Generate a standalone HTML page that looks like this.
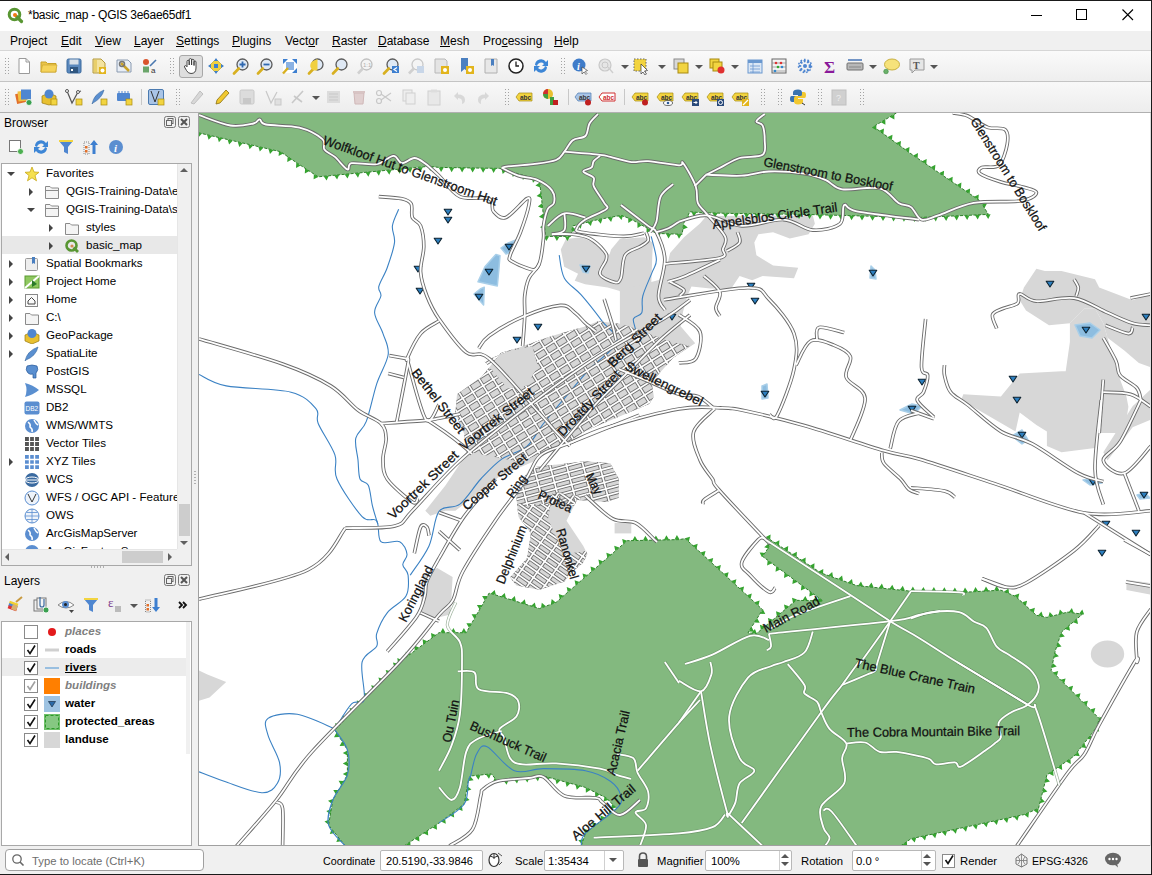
<!DOCTYPE html>
<html><head><meta charset="utf-8">
<style>
*{margin:0;padding:0;box-sizing:border-box}
html,body{width:1152px;height:875px;overflow:hidden;background:#f0f0f0;font-family:"Liberation Sans",sans-serif;font-size:12px;color:#000}
.a{position:absolute}
#title{left:0;top:0;width:1151px;height:31px;background:#fff}
#menu{left:0;top:31px;width:1151px;height:19px;background:#f0f0f0}
.mi{position:absolute;top:3px;font-size:12px;white-space:nowrap}
.mi u{text-decoration:underline}
#tb1{left:0;top:50px;width:1151px;height:31px;background:linear-gradient(#fafafa,#eeeeee);border-top:1px solid #d6d6d6}
#tb2{left:0;top:81px;width:1151px;height:31px;background:linear-gradient(#f8f8f8,#ededed);border-top:1px solid #c4c4c4}
.ic{position:absolute}
.grip{position:absolute;width:4px;height:17px;background-image:radial-gradient(circle,#a8a8a8 0.7px,transparent 0.9px);background-size:2px 3px}
.t{position:absolute;white-space:nowrap;font-size:12px;line-height:14px}
.arr{position:absolute;width:0;height:0}
.ar{border-top:4px solid transparent;border-bottom:4px solid transparent;border-left:4px solid #444}
.ad{border-left:4px solid transparent;border-right:4px solid transparent;border-top:4px solid #444}
.cb{position:absolute;width:14px;height:14px;border:1px solid #8a8a8a;background:#fff}
.dd{position:absolute;width:0;height:0;border-left:4px solid transparent;border-right:4px solid transparent;border-top:4px solid #555}
</style><style>.rc{fill:none;stroke:#6b6b6b;stroke-width:3.6;stroke-linejoin:round}.rw{fill:none;stroke:#fff;stroke-width:1.8;stroke-linejoin:round}.gc{fill:none;stroke:#5d7f5b;stroke-width:3.2;stroke-linejoin:round;opacity:.6}.gw{fill:none;stroke:#fff;stroke-width:1.8;stroke-linejoin:round}.tc{fill:none;stroke:#6b6b6b;stroke-width:3.4}.tw{fill:none;stroke:#fff;stroke-width:1.7}</style></head><body>

<div class="a" id="title">
<svg class="a" style="left:7px;top:7px" width="17" height="17" viewBox="0 0 17 17"><circle cx="7.5" cy="7.5" r="5.3" fill="none" stroke="#589632" stroke-width="3"/><path d="M9.5 9.5 L14.5 14.5" stroke="#589632" stroke-width="3.2" stroke-linecap="round"/><circle cx="8" cy="8" r="2" fill="#ee7913"/></svg>
<div class="t" style="left:28px;top:8px;font-size:12px;letter-spacing:-0.25px">*basic_map - QGIS 3e6ae65df1</div>
<svg class="a" style="left:1031px;top:9px" width="12" height="12"><path d="M0 6.5 H11" stroke="#000" stroke-width="1"/></svg>
<svg class="a" style="left:1076px;top:9px" width="12" height="12"><rect x="0.5" y="0.5" width="10" height="10" fill="none" stroke="#000"/></svg>
<svg class="a" style="left:1122px;top:9px" width="12" height="12"><path d="M0.5 0.5 L11 11 M11 0.5 L0.5 11" stroke="#000" stroke-width="1.1"/></svg>
</div>
<div class="a" id="menu"><div class="mi" style="left:10px">Pro<u>j</u>ect</div><div class="mi" style="left:61px"><u>E</u>dit</div><div class="mi" style="left:95px"><u>V</u>iew</div><div class="mi" style="left:134px"><u>L</u>ayer</div><div class="mi" style="left:176px"><u>S</u>ettings</div><div class="mi" style="left:232px"><u>P</u>lugins</div><div class="mi" style="left:285px">Vect<u>o</u>r</div><div class="mi" style="left:332px"><u>R</u>aster</div><div class="mi" style="left:378px"><u>D</u>atabase</div><div class="mi" style="left:440px"><u>M</u>esh</div><div class="mi" style="left:483px">Pro<u>c</u>essing</div><div class="mi" style="left:554px"><u>H</u>elp</div></div>
<div class="a" id="tb1"></div><div class="a" id="tb2"></div>
<svg class="ic" style="left:5px;top:58px" width="4" height="17"><rect x="0" y="0" width="1" height="1" fill="#a4a4a4"/><rect x="0" y="3" width="1" height="1" fill="#a4a4a4"/><rect x="0" y="6" width="1" height="1" fill="#a4a4a4"/><rect x="0" y="9" width="1" height="1" fill="#a4a4a4"/><rect x="0" y="12" width="1" height="1" fill="#a4a4a4"/><rect x="0" y="15" width="1" height="1" fill="#a4a4a4"/><rect x="3" y="0" width="1" height="1" fill="#a4a4a4"/><rect x="3" y="3" width="1" height="1" fill="#a4a4a4"/><rect x="3" y="6" width="1" height="1" fill="#a4a4a4"/><rect x="3" y="9" width="1" height="1" fill="#a4a4a4"/><rect x="3" y="12" width="1" height="1" fill="#a4a4a4"/><rect x="3" y="15" width="1" height="1" fill="#a4a4a4"/></svg><svg class="ic" style="left:15px;top:57px" width="18" height="18" viewBox="0 0 18 18"><path d="M4 1.5 H11 L14.5 5 V16.5 H4 Z" fill="#fff" stroke="#9a9a9a"/><path d="M11 1.5 V5 H14.5" fill="none" stroke="#9a9a9a"/></svg><svg class="ic" style="left:40px;top:57px" width="18" height="18" viewBox="0 0 18 18"><path d="M1 5 H6 L7.5 6.5 H16 V15 H1 Z" fill="#e9c44a" stroke="#c9a32a"/><path d="M2.5 8 H17 L15.5 15 H1 Z" fill="#f5d35a" stroke="#c9a32a" stroke-width="0.6"/></svg><svg class="ic" style="left:65px;top:57px" width="18" height="18" viewBox="0 0 18 18"><rect x="2" y="2" width="14" height="14" rx="1.5" fill="#5a88bd" stroke="#3b6a9e"/><rect x="4.5" y="2.5" width="9" height="5" fill="#d7dfe8"/><rect x="5" y="10" width="8" height="6" fill="#2f5680"/><rect x="6" y="12" width="2" height="2" fill="#fff"/></svg><svg class="ic" style="left:90px;top:57px" width="18" height="18" viewBox="0 0 18 18"><path d="M3 2 H11 L15 6 V16 H3 Z" fill="#f3e3a0" stroke="#b59a3a"/><rect x="4" y="3" width="3" height="12" fill="#e8cf6a"/><rect x="9" y="10" width="7" height="7" fill="#e2b51d"/><circle cx="12.5" cy="13.5" r="2" fill="#fff"/></svg><svg class="ic" style="left:115px;top:57px" width="18" height="18" viewBox="0 0 18 18"><path d="M2 3 H13 L16 6 V15 H2 Z" fill="#e8eef6" stroke="#8a9ab0"/><path d="M6 6 L14 14" stroke="#c9a32a" stroke-width="2.5"/><circle cx="7" cy="7" r="2.5" fill="none" stroke="#777" stroke-width="1.5"/></svg><svg class="ic" style="left:140px;top:57px" width="18" height="18" viewBox="0 0 18 18"><circle cx="6" cy="5" r="3" fill="#d9542c"/><rect x="3" y="9.5" width="6" height="6" fill="#6aa56a"/><path d="M10 9 L16 3" stroke="#4a78b0" stroke-width="1.6"/><text x="11" y="16" font-size="8" font-family="Liberation Sans" fill="#333">a</text></svg><svg class="ic" style="left:170px;top:58px" width="4" height="17"><rect x="0" y="0" width="1" height="1" fill="#a4a4a4"/><rect x="0" y="3" width="1" height="1" fill="#a4a4a4"/><rect x="0" y="6" width="1" height="1" fill="#a4a4a4"/><rect x="0" y="9" width="1" height="1" fill="#a4a4a4"/><rect x="0" y="12" width="1" height="1" fill="#a4a4a4"/><rect x="0" y="15" width="1" height="1" fill="#a4a4a4"/><rect x="3" y="0" width="1" height="1" fill="#a4a4a4"/><rect x="3" y="3" width="1" height="1" fill="#a4a4a4"/><rect x="3" y="6" width="1" height="1" fill="#a4a4a4"/><rect x="3" y="9" width="1" height="1" fill="#a4a4a4"/><rect x="3" y="12" width="1" height="1" fill="#a4a4a4"/><rect x="3" y="15" width="1" height="1" fill="#a4a4a4"/></svg><div class="a" style="left:179px;top:55px;width:24px;height:23px;border:1px solid #a8a8a8;border-radius:3px;background:#dedede"></div><svg class="ic" style="left:182px;top:57px" width="18" height="18" viewBox="0 0 18 18"><path d="M5 9 V4.5 Q5 3.3 6.2 3.3 Q7.2 3.3 7.2 4.5 V8 V2.8 Q7.2 1.6 8.4 1.6 Q9.6 1.6 9.6 2.8 V8 V3.5 Q9.6 2.3 10.8 2.3 Q12 2.3 12 3.5 V8.5 V5 Q12 4 13 4 Q14 4 14 5 V11 Q14 16.5 9 16.5 Q6 16.5 4.5 13.5 L2.5 10 Q2.2 8.8 3.4 8.6 Q4.3 8.6 5 9.8 Z" fill="#fff" stroke="#333" stroke-width="0.9"/></svg><svg class="ic" style="left:207px;top:57px" width="18" height="18" viewBox="0 0 18 18"><path d="M9 2 L16 9 L9 16 L2 9 Z" fill="#f0d040" stroke="#b49a20" stroke-width="0.6"/><path d="M9 1 L11 4 H7 Z M9 17 L11 14 H7 Z M1 9 L4 7 V11 Z M17 9 L14 7 V11 Z" fill="#3d7fd0"/><rect x="7" y="7" width="4" height="4" fill="#3d7fd0"/></svg><svg class="ic" style="left:232px;top:57px" width="18" height="18" viewBox="0 0 18 18"><circle cx="10.5" cy="7.5" r="5.5" fill="#dfe9f5" stroke="#5a5a5a" stroke-width="1.3"/><path d="M6.8 11.5 L2 16.5" stroke="#d8b020" stroke-width="2.6" stroke-linecap="round"/><path d="M7.5 7.5 H13.5 M10.5 4.5 V10.5" stroke="#2f68b0" stroke-width="1.8"/></svg><svg class="ic" style="left:256px;top:57px" width="18" height="18" viewBox="0 0 18 18"><circle cx="10.5" cy="7.5" r="5.5" fill="#dfe9f5" stroke="#5a5a5a" stroke-width="1.3"/><path d="M6.8 11.5 L2 16.5" stroke="#d8b020" stroke-width="2.6" stroke-linecap="round"/><path d="M7.5 7.5 H13.5" stroke="#2f68b0" stroke-width="1.8"/></svg><svg class="ic" style="left:281px;top:57px" width="18" height="18" viewBox="0 0 18 18"><rect x="2" y="2" width="14" height="14" fill="#fff" stroke="none"/><path d="M2 2 H7 L2 7 Z M16 2 H11 L16 7 Z M16 16 H11 L16 11 Z" fill="#3d7fd0"/><rect x="5" y="5" width="8" height="8" fill="#3d7fd0" opacity="0.6"/><path d="M7 11 L2 16.5" stroke="#d8b020" stroke-width="2.4"/></svg><svg class="ic" style="left:307px;top:57px" width="18" height="18" viewBox="0 0 18 18"><circle cx="10.5" cy="7.5" r="5.5" fill="#dfe9f5" stroke="#5a5a5a" stroke-width="1.3"/><path d="M6.8 11.5 L2 16.5" stroke="#d8b020" stroke-width="2.6" stroke-linecap="round"/><path d="M6 4 A5 5 0 0 0 10.5 13 V2 Z" fill="#f0d040"/></svg><svg class="ic" style="left:331px;top:57px" width="18" height="18" viewBox="0 0 18 18"><circle cx="10.5" cy="7.5" r="5.5" fill="#dfe9f5" stroke="#5a5a5a" stroke-width="1.3"/><path d="M6.8 11.5 L2 16.5" stroke="#d8b020" stroke-width="2.6" stroke-linecap="round"/></svg><svg class="ic" style="left:356px;top:57px" width="18" height="18" viewBox="0 0 18 18"><circle cx="10.5" cy="7.5" r="5.5" fill="#f4f4f4" stroke="#c0c0c0" stroke-width="1.3"/><path d="M6.8 11.5 L2 16.5" stroke="#d0d0d0" stroke-width="2.6"/><text x="7" y="10" font-size="6" fill="#b0b0b0" font-family="Liberation Sans">1:1</text></svg><svg class="ic" style="left:382px;top:57px" width="18" height="18" viewBox="0 0 18 18"><circle cx="10.5" cy="7.5" r="5.5" fill="#dfe9f5" stroke="#5a5a5a" stroke-width="1.3"/><path d="M6.8 11.5 L2 16.5" stroke="#d8b020" stroke-width="2.6" stroke-linecap="round"/><rect x="10" y="9" width="7" height="7" fill="#3d7fd0"/><path d="M15 10.5 L12 12.5 L15 14.5" stroke="#fff" fill="none" stroke-width="1.2"/></svg><svg class="ic" style="left:407px;top:57px" width="18" height="18" viewBox="0 0 18 18"><circle cx="10.5" cy="7.5" r="5.5" fill="#f4f4f4" stroke="#c8c8c8" stroke-width="1.3"/><path d="M6.8 11.5 L2 16.5" stroke="#d0d0d0" stroke-width="2.6"/><rect x="10" y="9" width="7" height="7" fill="#c8d6e8"/></svg><svg class="ic" style="left:432px;top:57px" width="18" height="18" viewBox="0 0 18 18"><path d="M3 2 H13 L15 4 V16 H3 Z" fill="#e4e4e4" stroke="#b8b8b8"/><rect x="9" y="9" width="8" height="8" fill="#e2b51d"/><circle cx="13" cy="13" r="2" fill="#fff"/></svg><svg class="ic" style="left:457px;top:57px" width="18" height="18" viewBox="0 0 18 18"><path d="M4 1 H11 V15 L7.5 12 L4 15 Z" fill="#4a7fc0"/><rect x="9" y="9" width="8" height="8" fill="#e2b51d"/><circle cx="13" cy="13" r="2" fill="#fff"/></svg><svg class="ic" style="left:482px;top:57px" width="18" height="18" viewBox="0 0 18 18"><path d="M3 2 H15 V16 H3 Z" fill="#e8e8e8" stroke="#b0b0b0"/><path d="M9 2 H12 V9 L10.5 8 L9 9 Z" fill="#4a7fc0"/></svg><svg class="ic" style="left:507px;top:57px" width="18" height="18" viewBox="0 0 18 18"><circle cx="9" cy="9" r="7" fill="#fff" stroke="#222" stroke-width="1.5"/><path d="M9 4.5 V9 H12" stroke="#222" fill="none" stroke-width="1.3"/></svg><svg class="ic" style="left:532px;top:57px" width="18" height="18" viewBox="0 0 18 18"><path d="M3 8 A6 6 0 0 1 14 5 L16 3 V9 H10 L12 7 A4 4 0 0 0 5 9 Z M15 10 A6 6 0 0 1 4 13 L2 15 V9 H8 L6 11 A4 4 0 0 0 13 9 Z" fill="#3d86d6"/></svg><svg class="ic" style="left:561px;top:58px" width="4" height="17"><rect x="0" y="0" width="1" height="1" fill="#a4a4a4"/><rect x="0" y="3" width="1" height="1" fill="#a4a4a4"/><rect x="0" y="6" width="1" height="1" fill="#a4a4a4"/><rect x="0" y="9" width="1" height="1" fill="#a4a4a4"/><rect x="0" y="12" width="1" height="1" fill="#a4a4a4"/><rect x="0" y="15" width="1" height="1" fill="#a4a4a4"/><rect x="3" y="0" width="1" height="1" fill="#a4a4a4"/><rect x="3" y="3" width="1" height="1" fill="#a4a4a4"/><rect x="3" y="6" width="1" height="1" fill="#a4a4a4"/><rect x="3" y="9" width="1" height="1" fill="#a4a4a4"/><rect x="3" y="12" width="1" height="1" fill="#a4a4a4"/><rect x="3" y="15" width="1" height="1" fill="#a4a4a4"/></svg><svg class="ic" style="left:571px;top:57px" width="18" height="18" viewBox="0 0 18 18"><circle cx="8" cy="8" r="6.5" fill="#3f7cc9"/><text x="6" y="12.5" font-size="10" font-style="italic" font-weight="bold" fill="#fff" font-family="Liberation Serif">i</text><path d="M11 10 L11 17 L13 15 L15 17.5 L16 16.5 L14 14.5 L16.5 13.5 Z" fill="#fff" stroke="#333" stroke-width="0.6"/></svg><svg class="ic" style="left:597px;top:57px" width="18" height="18" viewBox="0 0 18 18"><circle cx="8" cy="8" r="6" fill="#e6e6e6" stroke="#c8c8c8" stroke-width="1.2"/><circle cx="8" cy="8" r="3" fill="none" stroke="#c8c8c8"/><path d="M11 10 L16 16" stroke="#cfcfcf" stroke-width="1.4"/></svg><div class="dd" style="left:621px;top:65px"></div><svg class="ic" style="left:632px;top:57px" width="18" height="18" viewBox="0 0 18 18"><rect x="2" y="2" width="12" height="12" fill="#f2d440" stroke="#666" stroke-dasharray="1.5 1.5"/><path d="M9 7 L9 17 L11 15 L13 18 L14.5 17 L12.5 14 L15.5 13.5 Z" fill="#fff" stroke="#333" stroke-width="0.7"/></svg><div class="dd" style="left:658px;top:65px"></div><svg class="ic" style="left:672px;top:57px" width="18" height="18" viewBox="0 0 18 18"><rect x="2" y="2" width="10" height="10" fill="#d8d8d8" stroke="#8a8a8a"/><rect x="6" y="6" width="10" height="10" fill="#f2d440" stroke="#a88a10"/></svg><div class="dd" style="left:695px;top:65px"></div><svg class="ic" style="left:708px;top:57px" width="18" height="18" viewBox="0 0 18 18"><rect x="2" y="2" width="9" height="9" fill="#f2d440" stroke="#a88a10"/><rect x="5" y="5" width="9" height="9" fill="#f2d440" stroke="#a88a10"/><circle cx="13" cy="13" r="3.5" fill="#e03030"/></svg><div class="dd" style="left:731px;top:65px"></div><svg class="ic" style="left:746px;top:57px" width="18" height="18" viewBox="0 0 18 18"><rect x="2" y="3" width="14" height="13" fill="#dbe7f5" stroke="#6a98cf"/><rect x="2" y="3" width="14" height="3" fill="#6a98cf"/><path d="M4 9 H14 M4 12 H14 M4 15 H14 M7 6 V16" stroke="#6a98cf" stroke-width="0.8"/></svg><svg class="ic" style="left:770px;top:57px" width="18" height="18" viewBox="0 0 18 18"><rect x="2" y="2" width="14" height="14" fill="#f4f4f4" stroke="#666"/><path d="M2 6 H16 M2 10 H16 M2 14 H16" stroke="#888" stroke-width="0.7"/><circle cx="6" cy="6" r="1.3" fill="#d33"/><circle cx="11" cy="6" r="1.3" fill="#d33"/><circle cx="8" cy="10" r="1.3" fill="#3a3"/><circle cx="12" cy="10" r="1.3" fill="#38c"/><circle cx="5" cy="14" r="1.3" fill="#38c"/></svg><svg class="ic" style="left:796px;top:57px" width="18" height="18" viewBox="0 0 18 18"><circle cx="9" cy="9" r="5" fill="none" stroke="#4f86d0" stroke-width="2.5" stroke-dasharray="2 1.6"/><circle cx="9" cy="9" r="6.5" fill="none" stroke="#4f86d0" stroke-width="1.5" stroke-dasharray="1.6 2"/><circle cx="9" cy="9" r="2" fill="#4f86d0"/></svg><svg class="ic" style="left:821px;top:57px" width="18" height="18" viewBox="0 0 18 18"><text x="3" y="16" font-size="17" font-weight="bold" fill="#8a1a9a" font-family="Liberation Serif">&#931;</text></svg><svg class="ic" style="left:846px;top:57px" width="18" height="18" viewBox="0 0 18 18"><rect x="1" y="6" width="16" height="7" rx="1" fill="#b8b8b8" stroke="#707070"/><path d="M2 3 H16" stroke="#3a6ab0" stroke-width="1.4"/><path d="M3 10 H15" stroke="#888"/></svg><div class="dd" style="left:869px;top:65px"></div><svg class="ic" style="left:882px;top:57px" width="18" height="18" viewBox="0 0 18 18"><ellipse cx="10" cy="7.5" rx="7.5" ry="5.5" fill="#f6e27a" stroke="#c8b040"/><circle cx="4" cy="14.5" r="2.3" fill="#6ab06a" stroke="#3a8a3a" stroke-width="0.6"/></svg><svg class="ic" style="left:908px;top:57px" width="18" height="18" viewBox="0 0 18 18"><path d="M2 2 H16 V13 H7 L4 16 V13 H2 Z" fill="#e6e6e6" stroke="#9a9a9a"/><text x="5" y="11.5" font-size="10" font-weight="bold" fill="#555" font-family="Liberation Serif">T</text></svg><div class="dd" style="left:930px;top:65px"></div><svg class="ic" style="left:5px;top:89px" width="4" height="17"><rect x="0" y="0" width="1" height="1" fill="#a4a4a4"/><rect x="0" y="3" width="1" height="1" fill="#a4a4a4"/><rect x="0" y="6" width="1" height="1" fill="#a4a4a4"/><rect x="0" y="9" width="1" height="1" fill="#a4a4a4"/><rect x="0" y="12" width="1" height="1" fill="#a4a4a4"/><rect x="0" y="15" width="1" height="1" fill="#a4a4a4"/><rect x="3" y="0" width="1" height="1" fill="#a4a4a4"/><rect x="3" y="3" width="1" height="1" fill="#a4a4a4"/><rect x="3" y="6" width="1" height="1" fill="#a4a4a4"/><rect x="3" y="9" width="1" height="1" fill="#a4a4a4"/><rect x="3" y="12" width="1" height="1" fill="#a4a4a4"/><rect x="3" y="15" width="1" height="1" fill="#a4a4a4"/></svg><svg class="ic" style="left:15px;top:88px" width="18" height="18" viewBox="0 0 18 18"><rect x="1" y="5" width="10" height="10" fill="#e2702a" transform="rotate(-12 6 10)"/><rect x="3" y="3" width="10" height="10" fill="#f0c040" transform="rotate(-6 8 8)"/><rect x="6" y="1.5" width="10" height="10" fill="#4f86d0"/><circle cx="14" cy="14.5" r="3" fill="#3aa050" stroke="#fff" stroke-width="0.8"/></svg><svg class="ic" style="left:40px;top:88px" width="18" height="18" viewBox="0 0 18 18"><path d="M2 8 L9 5 L16 8 V15 L9 17 L2 15 Z" fill="#e8c030" stroke="#9a7a10" stroke-width="0.7"/><circle cx="9" cy="6" r="4.5" fill="#4f86d0"/><rect x="11" y="11" width="6" height="6" fill="#f2d440" stroke="#a88a10" stroke-width="0.7"/></svg><svg class="ic" style="left:65px;top:88px" width="18" height="18" viewBox="0 0 18 18"><path d="M2 3 L7 15 L13 4 L16 3" fill="none" stroke="#555" stroke-width="1.2"/><circle cx="2" cy="3" r="1.5" fill="#fff" stroke="#555"/><circle cx="13" cy="4" r="1.5" fill="#fff" stroke="#555"/><rect x="11" y="11" width="6" height="6" fill="#f2d440" stroke="#a88a10" stroke-width="0.7"/></svg><svg class="ic" style="left:90px;top:88px" width="18" height="18" viewBox="0 0 18 18"><path d="M2 16 Q4 6 14 2 Q12 10 3 15 Z" fill="#5a8fd0" stroke="#3a6aa0" stroke-width="0.6"/><rect x="11" y="11" width="6" height="6" fill="#f2d440" stroke="#a88a10" stroke-width="0.7"/></svg><svg class="ic" style="left:115px;top:88px" width="18" height="18" viewBox="0 0 18 18"><rect x="2" y="5" width="13" height="8" rx="1" fill="#4f86d0"/><path d="M4 3 V5 M7 3 V5 M10 3 V5 M13 3 V5" stroke="#4f86d0"/><rect x="11" y="11" width="6" height="6" fill="#f2d440" stroke="#a88a10" stroke-width="0.7"/></svg><div class="a" style="left:141px;top:89px;width:1px;height:16px;background:#c8c8c8"></div><svg class="ic" style="left:147px;top:88px" width="18" height="18" viewBox="0 0 18 18"><rect x="1.5" y="1.5" width="15" height="15" rx="1.5" fill="#a9c4e6" stroke="#4a7ab0"/><path d="M4 3 L8 14 L12 3" stroke="#333" fill="none"/><rect x="11" y="11" width="6" height="6" fill="#f2d440" stroke="#a88a10" stroke-width="0.7"/></svg><svg class="ic" style="left:176px;top:89px" width="4" height="17"><rect x="0" y="0" width="1" height="1" fill="#a4a4a4"/><rect x="0" y="3" width="1" height="1" fill="#a4a4a4"/><rect x="0" y="6" width="1" height="1" fill="#a4a4a4"/><rect x="0" y="9" width="1" height="1" fill="#a4a4a4"/><rect x="0" y="12" width="1" height="1" fill="#a4a4a4"/><rect x="0" y="15" width="1" height="1" fill="#a4a4a4"/><rect x="3" y="0" width="1" height="1" fill="#a4a4a4"/><rect x="3" y="3" width="1" height="1" fill="#a4a4a4"/><rect x="3" y="6" width="1" height="1" fill="#a4a4a4"/><rect x="3" y="9" width="1" height="1" fill="#a4a4a4"/><rect x="3" y="12" width="1" height="1" fill="#a4a4a4"/><rect x="3" y="15" width="1" height="1" fill="#a4a4a4"/></svg><svg class="ic" style="left:188px;top:88px" width="18" height="18" viewBox="0 0 18 18"><path d="M3 15 L12 3 L15 6 L6 16 Z" fill="#d8d8d8" stroke="#c0c0c0"/></svg><svg class="ic" style="left:213px;top:88px" width="18" height="18" viewBox="0 0 18 18"><path d="M3 16 L4 12 L13 2 L16 5 L7 15 Z" fill="#f0c830" stroke="#8a7010" stroke-width="0.8"/></svg><svg class="ic" style="left:238px;top:88px" width="18" height="18" viewBox="0 0 18 18"><rect x="2" y="2" width="14" height="14" rx="1.5" fill="#dcdcdc" stroke="#c8c8c8"/><rect x="5" y="10" width="8" height="6" fill="#c8c8c8"/></svg><svg class="ic" style="left:264px;top:88px" width="18" height="18" viewBox="0 0 18 18"><path d="M2 3 L7 15 L13 4" fill="none" stroke="#c8c8c8" stroke-width="1.2"/><rect x="11" y="11" width="6" height="6" fill="#e0e0e0" stroke="#c8c8c8"/></svg><svg class="ic" style="left:289px;top:88px" width="18" height="18" viewBox="0 0 18 18"><path d="M3 15 L14 3 M5 8 L13 14" stroke="#c8c8c8" stroke-width="1.6"/></svg><div class="dd" style="left:312px;top:96px"></div><svg class="ic" style="left:325px;top:88px" width="18" height="18" viewBox="0 0 18 18"><rect x="2" y="3" width="13" height="12" fill="#dcdcdc"/><path d="M4 6 H13 M4 9 H13 M4 12 H13" stroke="#c8c8c8"/></svg><svg class="ic" style="left:350px;top:88px" width="18" height="18" viewBox="0 0 18 18"><path d="M4 5 H14 L13 16 H5 Z" fill="#e0cfcf" stroke="#d0b8b8"/><rect x="3" y="3" width="12" height="2" fill="#d8c4c4"/></svg><svg class="ic" style="left:375px;top:88px" width="18" height="18" viewBox="0 0 18 18"><circle cx="4" cy="5" r="2.5" fill="none" stroke="#c8c8c8" stroke-width="1.2"/><circle cx="4" cy="13" r="2.5" fill="none" stroke="#c8c8c8" stroke-width="1.2"/><path d="M6 6 L16 13 M6 12 L16 5" stroke="#c8c8c8" stroke-width="1.2"/></svg><svg class="ic" style="left:400px;top:88px" width="18" height="18" viewBox="0 0 18 18"><rect x="3" y="2" width="9" height="11" fill="#eee" stroke="#d0d0d0"/><rect x="6" y="5" width="9" height="11" fill="#eee" stroke="#d0d0d0"/></svg><svg class="ic" style="left:425px;top:88px" width="18" height="18" viewBox="0 0 18 18"><rect x="3" y="3" width="12" height="14" fill="#e8e8e8" stroke="#d0d0d0"/><rect x="6" y="1.5" width="6" height="3" fill="#ddd"/></svg><svg class="ic" style="left:450px;top:88px" width="18" height="18" viewBox="0 0 18 18"><path d="M4 8 L8 4 V6.5 Q15 6.5 15 12 Q15 15 12 16 Q13 10 8 10 V12 Z" fill="#d8d8d8"/></svg><svg class="ic" style="left:475px;top:88px" width="18" height="18" viewBox="0 0 18 18"><path d="M14 8 L10 4 V6.5 Q3 6.5 3 12 Q3 15 6 16 Q5 10 10 10 V12 Z" fill="#d8d8d8"/></svg><svg class="ic" style="left:505px;top:89px" width="4" height="17"><rect x="0" y="0" width="1" height="1" fill="#a4a4a4"/><rect x="0" y="3" width="1" height="1" fill="#a4a4a4"/><rect x="0" y="6" width="1" height="1" fill="#a4a4a4"/><rect x="0" y="9" width="1" height="1" fill="#a4a4a4"/><rect x="0" y="12" width="1" height="1" fill="#a4a4a4"/><rect x="0" y="15" width="1" height="1" fill="#a4a4a4"/><rect x="3" y="0" width="1" height="1" fill="#a4a4a4"/><rect x="3" y="3" width="1" height="1" fill="#a4a4a4"/><rect x="3" y="6" width="1" height="1" fill="#a4a4a4"/><rect x="3" y="9" width="1" height="1" fill="#a4a4a4"/><rect x="3" y="12" width="1" height="1" fill="#a4a4a4"/><rect x="3" y="15" width="1" height="1" fill="#a4a4a4"/></svg><svg class="ic" style="left:515px;top:88px" width="18" height="18" viewBox="0 0 18 18"><path d="M1 9 L4 5 H17 V13 H4 Z" fill="#f2d440" stroke="#a88a10" stroke-width="0.7"/><text x="5" y="11.5" font-size="6.5" font-weight="bold" fill="#333" font-family="Liberation Sans">abc</text></svg><svg class="ic" style="left:541px;top:88px" width="18" height="18" viewBox="0 0 18 18"><circle cx="7" cy="6" r="5" fill="#e8c030"/><path d="M7 6 L2 6 A5 5 0 0 1 7 1 Z" fill="#d03030"/><path d="M7 6 L7 11 A5 5 0 0 1 2 6 Z" fill="#40a040"/><rect x="9" y="9" width="4" height="8" fill="#40a040"/><rect x="12" y="12" width="5" height="5" fill="#c02020"/></svg><div class="a" style="left:568px;top:89px;width:1px;height:16px;background:#c8c8c8"></div><svg class="ic" style="left:574px;top:88px" width="18" height="18" viewBox="0 0 18 18"><path d="M1 9 L4 5 H17 V13 H4 Z" fill="#a9c4e6" stroke="#4a7ab0" stroke-width="0.7"/><text x="5" y="11.5" font-size="6.5" font-weight="bold" fill="#333" font-family="Liberation Sans">abc</text><circle cx="14" cy="14.5" r="3" fill="#c02020"/></svg><svg class="ic" style="left:598px;top:88px" width="18" height="18" viewBox="0 0 18 18"><path d="M1 9 L4 5 H17 V13 H4 Z" fill="#fff" stroke="#d03030" stroke-width="1"/><text x="5" y="11.5" font-size="6.5" font-weight="bold" fill="#d03030" font-family="Liberation Sans">abc</text></svg><div class="a" style="left:624px;top:89px;width:1px;height:16px;background:#c8c8c8"></div><svg class="ic" style="left:631px;top:88px" width="18" height="18" viewBox="0 0 18 18"><path d="M1 9 L4 5 H17 V13 H4 Z" fill="#f2d440" stroke="#a88a10" stroke-width="0.7"/><text x="5" y="11.5" font-size="6.5" font-weight="bold" fill="#333" font-family="Liberation Sans">abc</text><circle cx="14" cy="14.5" r="3" fill="#c02020"/></svg><svg class="ic" style="left:656px;top:88px" width="18" height="18" viewBox="0 0 18 18"><path d="M1 9 L4 5 H17 V13 H4 Z" fill="#f2d440" stroke="#a88a10" stroke-width="0.7"/><text x="5" y="11.5" font-size="6.5" font-weight="bold" fill="#333" font-family="Liberation Sans">abc</text><ellipse cx="12" cy="15" rx="4.5" ry="2.5" fill="#fff" stroke="#333" stroke-width="0.7"/><circle cx="12" cy="15" r="1.3" fill="#2a5a9a"/></svg><svg class="ic" style="left:681px;top:88px" width="18" height="18" viewBox="0 0 18 18"><path d="M1 9 L4 5 H17 V13 H4 Z" fill="#f2d440" stroke="#a88a10" stroke-width="0.7"/><text x="5" y="11.5" font-size="6.5" font-weight="bold" fill="#333" font-family="Liberation Sans">abc</text><rect x="11" y="11" width="7" height="7" fill="#2a4a7a"/><path d="M12.5 14.5 H16 M14.5 13 L16 14.5 L14.5 16" stroke="#fff" fill="none"/></svg><svg class="ic" style="left:706px;top:88px" width="18" height="18" viewBox="0 0 18 18"><path d="M1 9 L4 5 H17 V13 H4 Z" fill="#f2d440" stroke="#a88a10" stroke-width="0.7"/><text x="5" y="11.5" font-size="6.5" font-weight="bold" fill="#333" font-family="Liberation Sans">abc</text><rect x="11" y="11" width="7" height="7" fill="#2a4a7a"/><circle cx="14.5" cy="14.5" r="2" fill="none" stroke="#fff"/></svg><svg class="ic" style="left:731px;top:88px" width="18" height="18" viewBox="0 0 18 18"><path d="M1 9 L4 5 H17 V13 H4 Z" fill="#f2d440" stroke="#a88a10" stroke-width="0.7"/><text x="5" y="11.5" font-size="6.5" font-weight="bold" fill="#333" font-family="Liberation Sans">abc</text><rect x="11" y="11" width="7" height="7" fill="#e2b51d"/><path d="M12 17 L17 12" stroke="#fff" stroke-width="1.2"/></svg><svg class="ic" style="left:761px;top:89px" width="4" height="17"><rect x="0" y="0" width="1" height="1" fill="#a4a4a4"/><rect x="0" y="3" width="1" height="1" fill="#a4a4a4"/><rect x="0" y="6" width="1" height="1" fill="#a4a4a4"/><rect x="0" y="9" width="1" height="1" fill="#a4a4a4"/><rect x="0" y="12" width="1" height="1" fill="#a4a4a4"/><rect x="0" y="15" width="1" height="1" fill="#a4a4a4"/><rect x="3" y="0" width="1" height="1" fill="#a4a4a4"/><rect x="3" y="3" width="1" height="1" fill="#a4a4a4"/><rect x="3" y="6" width="1" height="1" fill="#a4a4a4"/><rect x="3" y="9" width="1" height="1" fill="#a4a4a4"/><rect x="3" y="12" width="1" height="1" fill="#a4a4a4"/><rect x="3" y="15" width="1" height="1" fill="#a4a4a4"/></svg><svg class="ic" style="left:778px;top:89px" width="4" height="17"><rect x="0" y="0" width="1" height="1" fill="#a4a4a4"/><rect x="0" y="3" width="1" height="1" fill="#a4a4a4"/><rect x="0" y="6" width="1" height="1" fill="#a4a4a4"/><rect x="0" y="9" width="1" height="1" fill="#a4a4a4"/><rect x="0" y="12" width="1" height="1" fill="#a4a4a4"/><rect x="0" y="15" width="1" height="1" fill="#a4a4a4"/><rect x="3" y="0" width="1" height="1" fill="#a4a4a4"/><rect x="3" y="3" width="1" height="1" fill="#a4a4a4"/><rect x="3" y="6" width="1" height="1" fill="#a4a4a4"/><rect x="3" y="9" width="1" height="1" fill="#a4a4a4"/><rect x="3" y="12" width="1" height="1" fill="#a4a4a4"/><rect x="3" y="15" width="1" height="1" fill="#a4a4a4"/></svg><svg class="ic" style="left:789px;top:88px" width="18" height="18" viewBox="0 0 18 18"><path d="M9 1.5 Q4 1.5 4 4.5 V7 H9 V8 H2.5 Q1 8 1 11 Q1 14 3 14 H5 V11.5 Q5 10 7 10 H11 Q13 10 13 8 V4.5 Q13 1.5 9 1.5 Z" fill="#3a74b0"/><path d="M9 16.5 Q14 16.5 14 13.5 V11 H9 V10 H15.5 Q17 10 17 7 Q17 4 15 4 H13 V6.5 Q13 8 11 8 H7 Q5 8 5 10 V13.5 Q5 16.5 9 16.5 Z" fill="#f2c830"/><path d="M13 15 L16 17" stroke="#333"/></svg><svg class="ic" style="left:818px;top:89px" width="4" height="17"><rect x="0" y="0" width="1" height="1" fill="#a4a4a4"/><rect x="0" y="3" width="1" height="1" fill="#a4a4a4"/><rect x="0" y="6" width="1" height="1" fill="#a4a4a4"/><rect x="0" y="9" width="1" height="1" fill="#a4a4a4"/><rect x="0" y="12" width="1" height="1" fill="#a4a4a4"/><rect x="0" y="15" width="1" height="1" fill="#a4a4a4"/><rect x="3" y="0" width="1" height="1" fill="#a4a4a4"/><rect x="3" y="3" width="1" height="1" fill="#a4a4a4"/><rect x="3" y="6" width="1" height="1" fill="#a4a4a4"/><rect x="3" y="9" width="1" height="1" fill="#a4a4a4"/><rect x="3" y="12" width="1" height="1" fill="#a4a4a4"/><rect x="3" y="15" width="1" height="1" fill="#a4a4a4"/></svg><svg class="ic" style="left:830px;top:88px" width="18" height="18" viewBox="0 0 18 18"><rect x="2" y="2" width="14" height="15" fill="#d0d0d0" stroke="#c0c0c0"/><text x="6" y="13" font-size="9" fill="#eee" font-family="Liberation Sans">?</text></svg><svg class="ic" style="left:860px;top:89px" width="4" height="17"><rect x="0" y="0" width="1" height="1" fill="#a4a4a4"/><rect x="0" y="3" width="1" height="1" fill="#a4a4a4"/><rect x="0" y="6" width="1" height="1" fill="#a4a4a4"/><rect x="0" y="9" width="1" height="1" fill="#a4a4a4"/><rect x="0" y="12" width="1" height="1" fill="#a4a4a4"/><rect x="0" y="15" width="1" height="1" fill="#a4a4a4"/><rect x="3" y="0" width="1" height="1" fill="#a4a4a4"/><rect x="3" y="3" width="1" height="1" fill="#a4a4a4"/><rect x="3" y="6" width="1" height="1" fill="#a4a4a4"/><rect x="3" y="9" width="1" height="1" fill="#a4a4a4"/><rect x="3" y="12" width="1" height="1" fill="#a4a4a4"/><rect x="3" y="15" width="1" height="1" fill="#a4a4a4"/></svg>
<div class="a" style="left:0;top:112px;width:1151px;height:1px;background:#b0b0b0"></div>
<div class="t" style="left:4px;top:116px;font-size:12px">Browser</div><svg class="ic" style="left:164px;top:116px" width="26" height="13"><rect x="0.5" y="0.5" width="11" height="11" rx="2" fill="none" stroke="#777"/><rect x="4" y="2.5" width="5" height="5" fill="none" stroke="#666"/><rect x="2.5" y="4.5" width="5" height="5" fill="#f0f0f0" stroke="#666"/><rect x="14.5" y="0.5" width="11" height="11" rx="2" fill="none" stroke="#777"/><path d="M17 3 L23 9 M23 3 L17 9" stroke="#555" stroke-width="2"/></svg><svg class="ic" style="left:7px;top:138px" width="18" height="18" viewBox="0 0 18 18"><rect x="2.5" y="2.5" width="11" height="11" fill="#fff" stroke="#777"/><circle cx="13.5" cy="13.5" r="3" fill="#4caf50" stroke="#fff" stroke-width="0.8"/></svg><svg class="ic" style="left:32px;top:138px" width="18" height="18" viewBox="0 0 18 18"><path d="M3 8 A6 6 0 0 1 14 5 L16 3 V9 H10 L12 7 A4 4 0 0 0 5 9 Z M15 10 A6 6 0 0 1 4 13 L2 15 V9 H8 L6 11 A4 4 0 0 0 13 9 Z" fill="#3d86d6"/></svg><svg class="ic" style="left:57px;top:138px" width="18" height="18" viewBox="0 0 18 18"><path d="M2 3 H16 L11 9 V16 L7 14 V9 Z" fill="#4f86d0"/><rect x="2" y="2" width="14" height="2" fill="#f2d440"/></svg><svg class="ic" style="left:82px;top:138px" width="18" height="18" viewBox="0 0 18 18"><rect x="2" y="4" width="5" height="12" fill="none" stroke="#888" stroke-dasharray="1 1"/><rect x="3" y="8" width="2.5" height="2.5" fill="#e2702a"/><rect x="3" y="12" width="2.5" height="2.5" fill="#e2702a"/><path d="M12 2 L16 7 H13.5 V16 H10.5 V7 H8 Z" fill="#3d7fd0"/></svg><svg class="ic" style="left:107px;top:138px" width="18" height="18" viewBox="0 0 18 18"><circle cx="9" cy="9" r="7" fill="#5b8ed0"/><text x="7" y="13.5" font-size="11" font-style="italic" font-weight="bold" fill="#fff" font-family="Liberation Serif">i</text></svg><div class="a" style="left:1px;top:163px;width:191px;height:403px;background:#fff;border:1px solid #a8a8a8"></div><div class="a" style="left:2px;top:236px;width:175px;height:18px;background:#e8e8e8"></div><div class="a" style="left:2px;top:164px;width:175px;height:385px;overflow:hidden"><div class="arr ad" style="left:5px;top:7.5px"></div><svg class="ic" style="left:22px;top:1.5px" width="16" height="16" viewBox="0 0 16 16"><path d="M8 1 L10 6 L15 6.3 L11 9.5 L12.5 14.8 L8 11.8 L3.5 14.8 L5 9.5 L1 6.3 L6 6 Z" fill="#f5e050" stroke="#c8a818" stroke-width="0.8"/></svg><div class="t" style="left:44px;top:2.0px;font-size:11.6px">Favorites</div><div class="arr ar" style="left:27px;top:23.5px"></div><svg class="ic" style="left:42px;top:19.5px" width="16" height="16" viewBox="0 0 16 16"><path d="M1.5 2.5 H6 L7.5 4 H14.5 V14.5 H1.5 Z" fill="#f4f4f4" stroke="#8a8a8a"/><path d="M1.5 6.5 H14.5" stroke="#8a8a8a"/></svg><div class="t" style="left:64px;top:20.0px;font-size:11.6px">QGIS-Training-Data\exercise_data</div><div class="arr ad" style="left:25px;top:43.5px"></div><svg class="ic" style="left:42px;top:37.5px" width="16" height="16" viewBox="0 0 16 16"><path d="M1.5 2.5 H6 L7.5 4 H14.5 V14.5 H1.5 Z" fill="#f4f4f4" stroke="#8a8a8a"/><path d="M1.5 6.5 H14.5" stroke="#8a8a8a"/></svg><div class="t" style="left:64px;top:38.0px;font-size:11.6px">QGIS-Training-Data\sample_data</div><div class="arr ar" style="left:47px;top:59.5px"></div><svg class="ic" style="left:62px;top:55.5px" width="16" height="16" viewBox="0 0 16 16"><path d="M1.5 3.5 H6 L7.5 5 H14.5 V14.5 H1.5 Z" fill="#f4f4f4" stroke="#8a8a8a"/></svg><div class="t" style="left:84px;top:56.0px;font-size:11.6px">styles</div><div class="arr ar" style="left:47px;top:77.5px"></div><svg class="ic" style="left:62px;top:73.5px" width="16" height="16" viewBox="0 0 16 16"><circle cx="7.5" cy="7.5" r="5" fill="none" stroke="#589632" stroke-width="2.6"/><path d="M9.5 9.5 L14 14" stroke="#589632" stroke-width="2.8"/><circle cx="8" cy="8" r="1.6" fill="#d08a50"/></svg><div class="t" style="left:84px;top:74.0px;font-size:11.6px">basic_map</div><div class="arr ar" style="left:7px;top:95.5px"></div><svg class="ic" style="left:22px;top:91.5px" width="16" height="16" viewBox="0 0 16 16"><rect x="1.5" y="2.5" width="12" height="12" rx="1" fill="#eee" stroke="#999"/><path d="M8 1 H11 V8 L9.5 7 L8 8 Z" fill="#4a7fc0"/></svg><div class="t" style="left:44px;top:92.0px;font-size:11.6px">Spatial Bookmarks</div><div class="arr ar" style="left:7px;top:113.5px"></div><svg class="ic" style="left:22px;top:109.5px" width="16" height="16" viewBox="0 0 16 16"><rect x="1" y="2" width="14" height="12" fill="#8fc860" stroke="#5a9a30"/><path d="M1 14 L15 2" stroke="#fff" stroke-width="2"/><path d="M8 6 L13 10 L8 13 Z" fill="#2a7a2a"/></svg><div class="t" style="left:44px;top:110.0px;font-size:11.6px">Project Home</div><div class="arr ar" style="left:7px;top:131.5px"></div><svg class="ic" style="left:22px;top:127.5px" width="16" height="16" viewBox="0 0 16 16"><rect x="1.5" y="2.5" width="12" height="12" fill="#fafafa" stroke="#888"/><path d="M4 9 L7.5 5.5 L11 9 V12 H4 Z" fill="none" stroke="#444"/></svg><div class="t" style="left:44px;top:128.0px;font-size:11.6px">Home</div><div class="arr ar" style="left:7px;top:149.5px"></div><svg class="ic" style="left:22px;top:145.5px" width="16" height="16" viewBox="0 0 16 16"><path d="M1.5 3.5 H6 L7.5 5 H14.5 V14.5 H1.5 Z" fill="#f4f4f4" stroke="#8a8a8a"/></svg><div class="t" style="left:44px;top:146.0px;font-size:11.6px">C:\</div><div class="arr ar" style="left:7px;top:167.5px"></div><svg class="ic" style="left:22px;top:163.5px" width="16" height="16" viewBox="0 0 16 16"><path d="M1 7 L8 4 L15 7 V13 L8 16 L1 13 Z" fill="#e8c030" stroke="#9a7a10" stroke-width="0.7"/><circle cx="8" cy="5.5" r="4.5" fill="#4f86d0"/></svg><div class="t" style="left:44px;top:164.0px;font-size:11.6px">GeoPackage</div><div class="arr ar" style="left:7px;top:185.5px"></div><svg class="ic" style="left:22px;top:181.5px" width="16" height="16" viewBox="0 0 16 16"><path d="M1 15 Q3 5 14 1 Q12 10 2 14 Z" fill="#5a8fd0" stroke="#3a6aa0" stroke-width="0.6"/></svg><div class="t" style="left:44px;top:182.0px;font-size:11.6px">SpatiaLite</div><svg class="ic" style="left:22px;top:199.5px" width="16" height="16" viewBox="0 0 16 16"><path d="M3 2 Q8 0 13 2 Q15 6 12 9 V14 H9 V10 Q6 11 4 9 Q1 6 3 2 Z" fill="#5a8fd0" stroke="#2a5a9a" stroke-width="0.7"/></svg><div class="t" style="left:44px;top:200.0px;font-size:11.6px">PostGIS</div><svg class="ic" style="left:22px;top:217.5px" width="16" height="16" viewBox="0 0 16 16"><path d="M1 1 Q9 3 15 8 Q9 13 1 15 Q4 8 1 1 Z" fill="#5a8fd0"/></svg><div class="t" style="left:44px;top:218.0px;font-size:11.6px">MSSQL</div><svg class="ic" style="left:22px;top:235.5px" width="16" height="16" viewBox="0 0 16 16"><rect x="0.5" y="1.5" width="15" height="13" rx="2" fill="#5b8ed0"/><text x="1.5" y="11" font-size="6.5" fill="#fff" font-family="Liberation Sans">DB2</text></svg><div class="t" style="left:44px;top:236.0px;font-size:11.6px">DB2</div><svg class="ic" style="left:22px;top:253.5px" width="16" height="16" viewBox="0 0 16 16"><circle cx="8" cy="8" r="7" fill="#5b8ed0"/><path d="M4 4 Q7 6 6 9 Q9 11 8 14 M10 2 Q12 6 14 7" stroke="#fff" fill="none" stroke-width="1.5"/></svg><div class="t" style="left:44px;top:254.0px;font-size:11.6px">WMS/WMTS</div><svg class="ic" style="left:22px;top:271.5px" width="16" height="16" viewBox="0 0 16 16"><rect x="1" y="1" width="14" height="14" fill="#555"/><path d="M5.5 1 V15 M10.5 1 V15 M1 5.5 H15 M1 10.5 H15" stroke="#fff" stroke-width="1.2"/></svg><div class="t" style="left:44px;top:272.0px;font-size:11.6px">Vector Tiles</div><div class="arr ar" style="left:7px;top:293.5px"></div><svg class="ic" style="left:22px;top:289.5px" width="16" height="16" viewBox="0 0 16 16"><rect x="1" y="1" width="14" height="14" fill="#5b8ed0"/><path d="M5.5 1 V15 M10.5 1 V15 M1 5.5 H15 M1 10.5 H15" stroke="#fff" stroke-width="1.4"/></svg><div class="t" style="left:44px;top:290.0px;font-size:11.6px">XYZ Tiles</div><svg class="ic" style="left:22px;top:307.5px" width="16" height="16" viewBox="0 0 16 16"><circle cx="8" cy="8" r="7" fill="#3a6aa0"/><ellipse cx="8" cy="8" rx="7" ry="3" fill="none" stroke="#fff"/><path d="M1 8 H15" stroke="#fff"/></svg><div class="t" style="left:44px;top:308.0px;font-size:11.6px">WCS</div><svg class="ic" style="left:22px;top:325.5px" width="16" height="16" viewBox="0 0 16 16"><circle cx="8" cy="8" r="7" fill="#eef3fa" stroke="#5b8ed0"/><path d="M4 4 L8 12 L12 4" stroke="#333" fill="none"/></svg><div class="t" style="left:44px;top:326.0px;font-size:11.6px">WFS / OGC API - Features</div><svg class="ic" style="left:22px;top:343.5px" width="16" height="16" viewBox="0 0 16 16"><circle cx="8" cy="8" r="7" fill="#eef3fa" stroke="#5b8ed0"/><path d="M1 8 H15 M8 1 V15 M2.5 4.5 H13.5 M2.5 11.5 H13.5" stroke="#5b8ed0" stroke-width="0.8"/></svg><div class="t" style="left:44px;top:344.0px;font-size:11.6px">OWS</div><svg class="ic" style="left:22px;top:361.5px" width="16" height="16" viewBox="0 0 16 16"><circle cx="8" cy="8" r="7" fill="#5b8ed0"/><path d="M4 4 Q7 6 6 9 Q9 11 8 14 M10 2 Q12 6 14 7" stroke="#fff" fill="none" stroke-width="1.5"/></svg><div class="t" style="left:44px;top:362.0px;font-size:11.6px">ArcGisMapServer</div><svg class="ic" style="left:22px;top:379.5px" width="16" height="16" viewBox="0 0 16 16"><circle cx="8" cy="8" r="7" fill="#5b8ed0"/></svg><div class="t" style="left:44px;top:380.0px;font-size:11.6px">ArcGisFeatureServer</div></div><div class="a" style="left:177px;top:164px;width:14px;height:385px;background:#f0f0f0;border-left:1px solid #e6e6e6"></div><div class="arr" style="left:180px;top:168px;border-left:4px solid transparent;border-right:4px solid transparent;border-bottom:4px solid #606060"></div><div class="a" style="left:179px;top:504px;width:11px;height:32px;background:#cdcdcd"></div><div class="arr" style="left:180px;top:541px;border-left:4px solid transparent;border-right:4px solid transparent;border-top:4px solid #606060"></div><div class="a" style="left:2px;top:549px;width:175px;height:16px;background:#f0f0f0;border-top:1px solid #e6e6e6"></div><div class="arr" style="left:5px;top:553px;border-top:4px solid transparent;border-bottom:4px solid transparent;border-right:4px solid #606060"></div><div class="a" style="left:122px;top:551px;width:41px;height:12px;background:#cdcdcd"></div><div class="arr" style="left:168px;top:553px;border-top:4px solid transparent;border-bottom:4px solid transparent;border-left:4px solid #606060"></div><div class="a" style="left:177px;top:549px;width:14px;height:16px;background:#f0f0f0"></div><div class="a" style="left:90px;top:566px;width:16px;height:2px;background-image:radial-gradient(circle,#b0b0b0 0.6px,transparent 0.8px);background-size:3px 2px"></div><div class="a" style="left:194px;top:470px;width:2px;height:16px;background-image:radial-gradient(circle,#b0b0b0 0.6px,transparent 0.8px);background-size:2px 3px"></div><div class="t" style="left:4px;top:574px;font-size:12px">Layers</div><svg class="ic" style="left:164px;top:574px" width="26" height="13"><rect x="0.5" y="0.5" width="11" height="11" rx="2" fill="none" stroke="#777"/><rect x="4" y="2.5" width="5" height="5" fill="none" stroke="#666"/><rect x="2.5" y="4.5" width="5" height="5" fill="#f0f0f0" stroke="#666"/><rect x="14.5" y="0.5" width="11" height="11" rx="2" fill="none" stroke="#777"/><path d="M17 3 L23 9 M23 3 L17 9" stroke="#555" stroke-width="2"/></svg><svg class="ic" style="left:7px;top:596px" width="18" height="18" viewBox="0 0 18 18"><path d="M9 6 L15 1" stroke="#c89a40" stroke-width="2"/><rect x="2" y="6" width="9" height="3" fill="#f0d030" transform="rotate(20 6 8)"/><rect x="1.5" y="8.5" width="9" height="3" fill="#4f86d0" transform="rotate(20 6 10)"/><rect x="1" y="11" width="9" height="3" fill="#e03030" transform="rotate(20 6 12)"/><path d="M6 8 L11 10 L9 15 L4 13 Z" fill="#d8b070"/></svg><svg class="ic" style="left:32px;top:596px" width="18" height="18" viewBox="0 0 18 18"><rect x="2" y="4" width="9" height="11" fill="none" stroke="#777"/><rect x="5" y="2" width="9" height="11" fill="#f4f4f4" stroke="#777"/><path d="M8 1 V9 Q8 11 10 11 Q12 11 12 9 V3" stroke="#3a6aa0" fill="none" stroke-width="1.2"/><circle cx="14" cy="14" r="3" fill="#3aa050" stroke="#fff" stroke-width="0.8"/></svg><svg class="ic" style="left:57px;top:596px" width="18" height="18" viewBox="0 0 18 18"><path d="M1 9 Q9 2 17 9 Q9 15 1 9 Z" fill="#fff" stroke="#888"/><circle cx="8.5" cy="8.5" r="3.5" fill="#5b8ed0"/><circle cx="8.5" cy="8.5" r="1.5" fill="#222"/><path d="M12 14 H17 L14.5 17 Z" fill="#444"/></svg><svg class="ic" style="left:82px;top:596px" width="18" height="18" viewBox="0 0 18 18"><path d="M2 3 H16 L11 9 V16 L7 14 V9 Z" fill="#4f86d0"/><rect x="2" y="2" width="14" height="2" fill="#f2d440"/></svg><svg class="ic" style="left:107px;top:596px" width="18" height="18" viewBox="0 0 18 18"><text x="1" y="11" font-size="13" fill="#7a3a8a" font-family="Liberation Serif">&#949;</text><rect x="8" y="10" width="6" height="6" fill="#bbb"/></svg><div class="dd" style="left:130px;top:604px"></div><svg class="ic" style="left:144px;top:596px" width="18" height="18" viewBox="0 0 18 18"><rect x="1.5" y="4" width="5" height="12" fill="none" stroke="#888" stroke-dasharray="1 1"/><rect x="2.5" y="8" width="2.5" height="2.5" fill="#e2702a"/><rect x="2.5" y="12" width="2.5" height="2.5" fill="#e2702a"/><path d="M12 16 L16 11 H13.5 V2 H10.5 V11 H8 Z" fill="#3d7fd0"/></svg><svg class="ic" style="left:178px;top:601px" width="10" height="8"><path d="M1 1 L4 4 L1 7 M5 1 L8 4 L5 7" stroke="#111" stroke-width="1.8" fill="none"/></svg><div class="a" style="left:1px;top:621px;width:191px;height:225px;background:#fff;border:1px solid #a8a8a8"></div><div class="a" style="left:2px;top:658px;width:186px;height:18px;background:#ececec"></div><div class="a" style="left:186px;top:622px;width:4px;height:132px;background:#f0f0f0"></div><div class="cb" style="left:24px;top:624.5px"></div><svg class="ic" style="left:44px;top:623.5px" width="16" height="16" viewBox="0 0 16 16"><circle cx="8" cy="8" r="4" fill="#e31a1c"/></svg><div class="t" style="left:65px;top:624.0px;font-size:11.6px;font-style:italic;font-weight:bold;color:#808080">places</div><div class="cb" style="left:24px;top:642.5px"></div><svg class="ic" style="left:25px;top:643.5px" width="12" height="12"><path d="M2.5 6 L5 9.5 L10 1.5" stroke="#111" stroke-width="1.6" fill="none"/></svg><svg class="ic" style="left:44px;top:641.5px" width="16" height="16" viewBox="0 0 16 16"><path d="M1 8 H15" stroke="#d0d0d0" stroke-width="3"/></svg><div class="t" style="left:65px;top:642.0px;font-size:11.6px;font-weight:bold">roads</div><div class="cb" style="left:24px;top:660.5px"></div><svg class="ic" style="left:25px;top:661.5px" width="12" height="12"><path d="M2.5 6 L5 9.5 L10 1.5" stroke="#111" stroke-width="1.6" fill="none"/></svg><svg class="ic" style="left:44px;top:659.5px" width="16" height="16" viewBox="0 0 16 16"><path d="M1 8 H15" stroke="#7eb0dc" stroke-width="1.5"/></svg><div class="t" style="left:65px;top:660.0px;font-size:11.6px;font-weight:bold;text-decoration:underline">rivers</div><div class="cb" style="left:24px;top:678.5px"></div><svg class="ic" style="left:25px;top:679.5px" width="12" height="12"><path d="M2.5 6 L5 9.5 L10 1.5" stroke="#a0a0a0" stroke-width="1.6" fill="none"/></svg><svg class="ic" style="left:44px;top:677.5px" width="16" height="16" viewBox="0 0 16 16"><rect x="0" y="0" width="16" height="16" fill="#ff7f00"/></svg><div class="t" style="left:65px;top:678.0px;font-size:11.6px;font-style:italic;font-weight:bold;color:#808080">buildings</div><div class="cb" style="left:24px;top:696.5px"></div><svg class="ic" style="left:25px;top:697.5px" width="12" height="12"><path d="M2.5 6 L5 9.5 L10 1.5" stroke="#111" stroke-width="1.6" fill="none"/></svg><svg class="ic" style="left:44px;top:695.5px" width="16" height="16" viewBox="0 0 16 16"><rect x="0" y="0" width="16" height="16" fill="#9ec3e2"/><path d="M4.5 5.5 H11.5 L8 11 Z" fill="#2a6aa8" stroke="#123" stroke-width="0.6"/></svg><div class="t" style="left:65px;top:696.0px;font-size:11.6px;font-weight:bold">water</div><div class="cb" style="left:24px;top:714.5px"></div><svg class="ic" style="left:25px;top:715.5px" width="12" height="12"><path d="M2.5 6 L5 9.5 L10 1.5" stroke="#111" stroke-width="1.6" fill="none"/></svg><svg class="ic" style="left:44px;top:713.5px" width="16" height="16" viewBox="0 0 16 16"><rect x="0" y="0" width="16" height="16" fill="#6fbf6a"/><rect x="1.5" y="1.5" width="13" height="13" fill="#86c882" stroke="#2e9a2a" stroke-dasharray="3 2"/></svg><div class="t" style="left:65px;top:714.0px;font-size:11.6px;font-weight:bold">protected_areas</div><div class="cb" style="left:24px;top:732.5px"></div><svg class="ic" style="left:25px;top:733.5px" width="12" height="12"><path d="M2.5 6 L5 9.5 L10 1.5" stroke="#111" stroke-width="1.6" fill="none"/></svg><svg class="ic" style="left:44px;top:731.5px" width="16" height="16" viewBox="0 0 16 16"><rect x="0" y="0" width="16" height="16" fill="#d7d7d7"/></svg><div class="t" style="left:65px;top:732.0px;font-size:11.6px;font-weight:bold">landuse</div>
<div class="a" style="left:198px;top:113px;width:953px;height:733px;background:#fff;overflow:hidden;border-left:1px solid #a0a0a0;border-bottom:1px solid #a0a0a0"><svg width="952" height="732" viewBox="199 113 952 732" style="position:absolute;left:0;top:0"><defs><clipPath id="ct"><path clip-rule="evenodd" d="M457.0,394.2 L481.3,377.2 L500.8,352.9 L517.8,348.1 L551.8,335.9 L585.8,326.2 L598.0,321.3 L619.9,323.8 L640.0,330.0 L665.0,340.0 L690.0,346.0 L673.3,357.8 L651.5,382.1 L653.9,396.7 L649.0,404.0 L585.8,430.7 L559.1,447.7 L537.2,455.0 L520.0,462.0 L470.0,452.0 L462.0,430.0 L455.4,412.7 Z M484.3,361.2 L507.6,351.6 L532.3,346.1 L537.8,366.6 L526.8,385.8 L507.6,388.6 L493.9,372.1 Z"/></clipPath><clipPath id="cs"><polygon points="518.4,485.3 531.0,467.4 585.4,461.2 610.4,463.3 618.8,479.0 618.8,497.8 606.3,502.0 577.0,499.9 566.5,520.8 583.3,545.9 587.4,554.3 583.3,562.6 568.6,575.2 564.4,581.4 539.4,589.8 516.4,585.6 510.1,577.3 526.8,558.4 531.0,533.4 518.4,516.6 516.4,497.8"/></clipPath><clipPath id="cu"><rect x="500" y="440" width="140" height="66"/></clipPath><clipPath id="cl"><path clip-rule="evenodd" d="M500,504 H640 V600 H500 Z M552.8,491.8 L580.0,496.6 L586.5,551.0 L564.0,554.2 L548.0,519.0 Z"/></clipPath></defs>
<polygon points="560.8,249.4 566.0,239.0 581.6,237.3 597.2,244.2 609.4,254.7 611.1,249.4 619.8,239.0 644.1,237.3 652.8,242.5 651.0,291.1 647.6,320.0 625.0,320.0 619.8,291.1 607.6,287.6 585.1,284.2 574.7,280.7 578.1,273.8 564.2,266.8" fill="#d7d7d7"/>
<polygon points="457.0,394.2 481.3,377.2 500.8,352.9 517.8,348.1 551.8,335.9 585.8,326.2 598.0,321.3 619.9,323.8 619.9,290.0 640.0,285.0 658.8,280.0 668.0,262.0 670.1,252.9 684.0,237.3 700.0,223.4 706.4,216.0 812.8,215.4 814.9,223.8 808.6,234.3 789.8,238.4 773.1,232.2 758.4,234.3 754.3,242.6 756.4,255.2 773.1,265.6 798.2,267.7 794.0,278.2 762.6,276.1 752.2,280.3 739.6,276.1 731.3,288.6 710.4,288.6 691.5,286.5 687.9,294.6 683.1,311.6 680.6,326.2 695.2,343.2 673.3,357.8 651.5,382.1 653.9,396.7 649.0,404.0 585.8,430.7 559.1,447.7 537.2,455.0 535.9,460.5 500.7,475.5 455.4,510.8 445.4,510.8 430.3,515.8 425.3,510.8 445.4,485.6 465.5,455.4 468.0,442.9 455.4,412.7" fill="#d7d7d7"/>
<polygon points="424.0,574.7 437.2,568.0 452.6,576.9 450.4,614.4 432.8,618.8 419.6,614.4" fill="#d7d7d7"/>
<polygon points="518.4,485.3 531.0,467.4 585.4,461.2 610.4,463.3 618.8,479.0 618.8,497.8 606.3,502.0 577.0,499.9 566.5,520.8 583.3,545.9 587.4,554.3 583.3,562.6 568.6,575.2 564.4,581.4 539.4,589.8 516.4,585.6 510.1,577.3 526.8,558.4 531.0,533.4 518.4,516.6 516.4,497.8" fill="#d7d7d7"/>
<polygon points="1023.9,287.6 1036.4,268.8 1044.8,270.9 1061.5,270.9 1095.0,279.3 1099.2,287.6 1132.6,300.2 1150.0,293.9 1150.0,367.1 1138.9,362.9 1124.3,350.4 1107.5,337.8 1103.3,323.2 1095.0,308.5 1084.5,308.5 1069.9,323.2 1049.0,325.3 1026.0,310.6 1019.7,300.2" fill="#d7d7d7"/>
<polygon points="1069.9,323.2 1084.5,308.5 1095.0,308.5 1103.3,323.2 1107.5,337.8 1120.1,379.6 1126.4,396.4 1128.4,406.8 1124.3,433.0 1099.2,433.0 1095.0,448.1 1061.5,452.3 1046.9,446.0 1046.9,431.4 1036.4,425.1 1019.7,412.5 1015.5,431.4 961.2,400.0 963.3,394.3 1000.9,396.4 1019.7,373.4 1061.5,371.3 1065.7,371.3 1069.9,342.0" fill="#d7d7d7"/>
<polygon points="1132.6,406.3 1150.0,390.0 1150.0,420.0 1132.6,427.2 1107.5,460.6 1103.3,452.3" fill="#d7d7d7"/>
<polygon points="614.6,522.9 631.3,522.9 631.3,533.4 614.6,533.4" fill="#d7d7d7"/>
<polygon points="199.0,670.4 207.4,674.5 226.2,681.9 209.5,697.5 199.0,700.7" fill="#d7d7d7"/>
<polygon points="1126.4,579.7 1150.0,583.0 1150.0,594.4 1126.4,590.0" fill="#d7d7d7"/>
<ellipse cx="1107.5" cy="654" rx="16.7" ry="13.6" fill="#d7d7d7"/>
<polygon points="199.0,113.0 896.4,113.0 873.4,126.6 911.0,153.8 980.0,200.8 988.4,214.4 919.0,217.5 804.4,214.4 730.0,213.4 699.4,212.6 689.9,211.7 683.8,223.0 682.1,234.3 656.0,233.4 647.4,228.2 630.0,218.6 620.9,215.4 597.9,219.6 572.8,225.9 570.7,236.4 545.6,236.4 542.5,207.1 539.4,179.9 499.6,168.4 439.0,167.4 429.0,166.3 318.2,176.8 297.3,163.2 280.5,151.7 199.0,132.9" fill="#83b97f"/>
<polygon points="399.7,662.0 334.9,730.0 347.4,749.8 347.4,774.9 332.8,800.0 328.6,825.1 345.4,846.0 403.9,846.0 439.0,823.0 464.1,804.2 468.3,781.2 470.4,776.0 491.3,773.9 497.5,781.2 543.5,776.0 585.4,787.4 606.3,797.9 616.7,808.4 585.4,833.4 581.2,846.0 900.6,846.0 911.0,838.7 1023.9,814.6 1038.5,808.4 1042.7,791.6 1046.9,774.9 1057.4,767.6 1074.1,756.1 1097.1,726.8 1099.2,718.5 1051.1,670.4 1055.3,650.8 1061.5,632.0 1082.4,614.2 1067.8,612.1 1046.9,617.4 1036.4,615.3 1015.5,596.4 1000.9,590.2 963.3,592.3 911.0,591.2 856.7,585.6 821.2,573.1 766.8,537.5 768.9,547.0 762.6,556.4 823.0,601.0 796.1,600.3 756.4,633.7 748.0,632.7 762.6,609.7 685.3,538.6 679.0,539.6 627.2,540.7 556.1,602.4 539.4,608.6 489.2,593.0 466.2,632.7 439.0,632.7" fill="#83b97f"/>
<polyline points="896.4,113.0 873.4,126.6 911.0,153.8 980.0,200.8 988.4,214.4 919.0,217.5 804.4,214.4 730.0,213.4 699.4,212.6 689.9,211.7 683.8,223.0 682.1,234.3 656.0,233.4 647.4,228.2 630.0,218.6 620.9,215.4 597.9,219.6 572.8,225.9 570.7,236.4 545.6,236.4 542.5,207.1 539.4,179.9 499.6,168.4 439.0,167.4 429.0,166.3 318.2,176.8 297.3,163.2 280.5,151.7 199.0,132.9" fill="none" stroke="#2f7f2c" stroke-width="1" stroke-dasharray="3 1.5"/>
<polyline points="399.7,662.0 334.9,730.0 347.4,749.8 347.4,774.9 332.8,800.0 328.6,825.1 345.4,846.0" fill="none" stroke="#2f7f2c" stroke-width="1" stroke-dasharray="3 1.5"/>
<polyline points="403.9,846.0 439.0,823.0 464.1,804.2 468.3,781.2 470.4,776.0 491.3,773.9 497.5,781.2 543.5,776.0 585.4,787.4 606.3,797.9 616.7,808.4 585.4,833.4 581.2,846.0" fill="none" stroke="#2f7f2c" stroke-width="1" stroke-dasharray="3 1.5"/>
<polyline points="900.6,846.0 911.0,838.7 1023.9,814.6 1038.5,808.4 1042.7,791.6 1046.9,774.9 1057.4,767.6 1074.1,756.1 1097.1,726.8 1099.2,718.5 1051.1,670.4 1055.3,650.8 1061.5,632.0 1082.4,614.2 1067.8,612.1 1046.9,617.4 1036.4,615.3 1015.5,596.4 1000.9,590.2 963.3,592.3 911.0,591.2 856.7,585.6 821.2,573.1 766.8,537.5 768.9,547.0 762.6,556.4 823.0,601.0 796.1,600.3 756.4,633.7 748.0,632.7 762.6,609.7 685.3,538.6 679.0,539.6 627.2,540.7 556.1,602.4 539.4,608.6 489.2,593.0 466.2,632.7 439.0,632.7 399.7,662.0" fill="none" stroke="#2f7f2c" stroke-width="1" stroke-dasharray="3 1.5"/>
<path d="M894.3,114.2 L889.9,116.9 L894.4,119.5Z M885.3,119.6 L880.8,122.2 L885.4,124.8Z M876.3,124.9 L871.8,127.6 L876.4,130.2Z M879.2,130.8 L883.4,133.9 L884.0,128.6Z M887.7,137.0 L891.9,140.0 L892.5,134.8Z M896.2,143.1 L900.4,146.2 L901.0,140.9Z M904.7,149.3 L909.0,152.3 L909.5,147.1Z M913.3,155.4 L917.6,158.3 L918.0,153.0Z M922.0,161.3 L926.3,164.2 L926.7,158.9Z M930.6,167.2 L934.9,170.1 L935.4,164.8Z M939.3,173.1 L943.6,176.0 L944.1,170.8Z M948.0,179.0 L952.3,181.9 L952.7,176.7Z M956.7,184.9 L961.0,187.8 L961.4,182.6Z M965.4,190.8 L969.7,193.8 L970.1,188.5Z M974.0,196.7 L978.3,199.7 L978.8,194.4Z M981.7,203.6 L984.5,208.0 L987.0,203.4Z M990.6,214.3 L985.4,214.5 L988.2,219.0Z M980.1,214.8 L974.9,215.0 L977.7,219.5Z M969.6,215.2 L964.4,215.5 L967.2,220.0Z M959.1,215.7 L953.9,215.9 L956.7,220.4Z M948.6,216.2 L943.4,216.4 L946.2,220.9Z M938.1,216.6 L933.0,216.9 L935.8,221.4Z M927.7,217.1 L922.5,217.3 L925.3,221.8Z M917.2,217.5 L912.0,217.3 L914.4,222.0Z M906.7,217.2 L901.5,217.0 L903.9,221.7Z M896.2,216.9 L891.0,216.7 L893.5,221.4Z M885.7,216.6 L880.5,216.5 L883.0,221.1Z M875.2,216.3 L870.0,216.2 L872.5,220.8Z M864.7,216.0 L859.5,215.9 L862.0,220.6Z M854.2,215.7 L849.0,215.6 L851.5,220.3Z M843.7,215.5 L838.5,215.3 L841.0,220.0Z M833.2,215.2 L828.0,215.0 L830.5,219.7Z M822.7,214.9 L817.5,214.8 L820.0,219.4Z M812.2,214.6 L807.0,214.5 L809.5,219.1Z M801.7,214.4 L796.5,214.3 L799.0,218.9Z M791.2,214.2 L786.0,214.2 L788.5,218.8Z M780.7,214.1 L775.5,214.0 L778.1,218.6Z M770.2,213.9 L765.0,213.9 L767.6,218.5Z M759.7,213.8 L754.5,213.7 L757.1,218.4Z M749.2,213.7 L744.0,213.6 L746.6,218.2Z M738.7,213.5 L733.5,213.4 L736.1,218.1Z M728.2,213.4 L723.0,213.2 L725.5,217.9Z M717.7,213.1 L712.5,212.9 L715.0,217.6Z M707.2,212.8 L702.0,212.7 L704.5,217.3Z M696.7,212.3 L691.6,211.9 L693.7,216.7Z M688.2,214.9 L685.7,219.5 L691.0,219.4Z M683.6,224.3 L682.8,229.4 L687.8,227.5Z M681.7,234.3 L676.5,234.1 L679.0,238.8Z M671.2,233.9 L666.0,233.7 L668.5,238.4Z M660.8,233.6 L655.6,233.4 L658.0,238.1Z M651.1,230.4 L646.6,227.7 L646.5,233.0Z M642.0,225.2 L637.4,222.7 L637.5,228.0Z M632.8,220.1 L628.2,217.6 L628.3,222.9Z M623.2,215.0 L618.1,215.9 L621.5,220.0Z M612.9,216.9 L607.7,217.8 L611.1,221.9Z M602.5,218.8 L597.4,219.7 L600.8,223.7Z M592.3,221.0 L587.2,222.3 L590.9,226.1Z M582.1,223.6 L577.0,224.8 L580.7,228.7Z M572.6,226.8 L571.6,231.9 L576.6,230.3Z M570.0,236.4 L564.8,236.4 L567.4,241.0Z M559.5,236.4 L554.3,236.4 L556.9,241.0Z M549.0,236.4 L543.8,236.4 L546.4,241.0Z M544.9,229.3 L544.3,224.2 L540.0,227.2Z M543.7,218.9 L543.2,213.7 L538.9,216.8Z M542.7,208.4 L542.1,203.3 L537.8,206.4Z M541.5,198.0 L540.9,192.8 L536.6,195.9Z M540.3,187.6 L539.7,182.4 L535.4,185.5Z M536.7,179.1 L531.7,177.7 L533.0,182.8Z M526.7,176.2 L521.7,174.8 L522.9,179.9Z M516.6,173.3 L511.6,171.9 L512.8,177.0Z M506.5,170.4 L501.5,168.9 L502.7,174.1Z M496.3,168.3 L491.1,168.3 L493.6,172.9Z M485.8,168.2 L480.6,168.1 L483.1,172.7Z M475.3,168.0 L470.1,167.9 L472.6,172.6Z M464.8,167.8 L459.6,167.7 L462.1,172.4Z M454.3,167.7 L449.1,167.6 L451.6,172.2Z M443.8,167.5 L438.6,167.4 L441.1,172.0Z M433.3,166.8 L428.1,166.2 L430.2,171.1Z M422.9,166.9 L417.7,167.4 L420.7,171.7Z M412.4,167.9 L407.2,168.4 L410.2,172.7Z M401.9,168.9 L396.8,169.4 L399.8,173.7Z M391.5,169.9 L386.3,170.3 L389.3,174.7Z M381.0,170.8 L375.9,171.3 L378.9,175.7Z M370.6,171.8 L365.4,172.3 L368.4,176.7Z M360.1,172.8 L355.0,173.3 L358.0,177.7Z M349.7,173.8 L344.5,174.3 L347.5,178.6Z M339.2,174.8 L334.1,175.3 L337.1,179.6Z M328.8,175.8 L323.6,176.3 L326.6,180.6Z M318.3,176.9 L313.9,174.0 L313.6,179.3Z M309.5,171.1 L305.1,168.3 L304.8,173.6Z M300.7,165.4 L296.3,162.6 L296.0,167.9Z M292.0,159.6 L287.7,156.6 L287.2,161.9Z M283.3,153.6 L279.0,150.7 L278.6,156.0Z M273.6,150.1 L268.5,148.9 L270.0,154.0Z M263.4,147.7 L258.3,146.6 L259.8,151.6Z M253.1,145.4 L248.1,144.2 L249.6,149.3Z M242.9,143.0 L237.8,141.9 L239.3,146.9Z M232.7,140.7 L227.6,139.5 L229.1,144.6Z M222.4,138.3 L217.4,137.1 L218.9,142.2Z M212.2,135.9 L207.1,134.8 L208.6,139.8Z M202.0,133.6 L196.9,132.4 L198.4,137.5Z M398.0,663.7 L394.5,667.5 L392.9,662.4Z M390.8,671.3 L387.2,675.1 L385.7,670.0Z M383.6,678.9 L380.0,682.7 L378.4,677.6Z M376.3,686.5 L372.7,690.3 L371.2,685.3Z M369.1,694.1 L365.5,697.9 L363.9,692.9Z M361.8,701.7 L358.2,705.5 L356.7,700.5Z M354.6,709.3 L351.0,713.1 L349.5,708.1Z M347.3,716.9 L343.8,720.7 L342.2,715.7Z M340.1,724.5 L336.5,728.3 L335.0,723.3Z M336.5,732.5 L339.3,736.9 L334.0,737.2Z M342.1,741.4 L344.9,745.8 L339.6,746.0Z M347.4,750.4 L347.4,755.6 L342.8,753.0Z M347.4,760.9 L347.4,766.1 L342.8,763.5Z M347.4,771.4 L347.4,776.6 L342.8,774.0Z M343.9,780.9 L341.3,785.4 L338.6,780.8Z M338.6,790.0 L336.0,794.5 L333.3,789.9Z M333.0,798.9 L332.1,804.1 L328.0,800.7Z M331.2,809.3 L330.4,814.4 L326.3,811.1Z M329.5,819.6 L328.7,824.8 L324.5,821.4Z M331.7,829.0 L335.0,833.0 L329.8,833.9Z M338.3,837.2 L341.5,841.2 L336.3,842.1Z M405.9,844.7 L410.3,841.8 L410.6,847.1Z M414.7,838.9 L419.0,836.1 L419.4,841.4Z M423.5,833.2 L427.8,830.3 L428.2,835.6Z M432.3,827.4 L436.6,824.6 L437.0,829.8Z M440.9,821.5 L445.1,818.4 L445.8,823.7Z M449.4,815.2 L453.5,812.1 L454.2,817.4Z M457.8,809.0 L461.9,805.8 L462.6,811.1Z M464.6,801.7 L465.5,796.6 L469.6,799.9Z M466.4,791.3 L467.4,786.2 L471.4,789.6Z M468.4,781.0 L470.3,776.2 L473.6,780.3Z M475.5,775.5 L480.6,775.0 L478.5,779.8Z M485.9,774.4 L491.1,773.9 L489.0,778.8Z M494.6,777.8 L498.0,781.7 L492.8,782.7Z M503.5,780.5 L508.6,779.9 L506.6,784.8Z M513.9,779.3 L519.1,778.8 L517.0,783.6Z M524.3,778.2 L529.5,777.6 L527.4,782.4Z M534.8,777.0 L539.9,776.4 L537.9,781.3Z M545.2,776.4 L550.2,777.8 L546.5,781.6Z M555.3,779.2 L560.3,780.6 L556.6,784.3Z M565.4,782.0 L570.4,783.3 L566.7,787.1Z M575.5,784.7 L580.6,786.1 L576.8,789.8Z M585.7,787.5 L590.3,789.9 L585.9,792.8Z M595.0,792.2 L599.7,794.6 L595.3,797.5Z M604.8,796.4 L608.5,800.1 L603.4,801.5Z M612.2,803.9 L615.9,807.6 L610.8,809.0Z M613.5,811.0 L609.4,814.2 L608.6,809.0Z M605.3,817.5 L601.2,820.8 L600.4,815.6Z M597.1,824.1 L593.0,827.3 L592.2,822.1Z M588.9,830.6 L584.8,833.9 L584.0,828.7Z M583.5,839.2 L581.8,844.1 L578.3,840.2Z M902.6,844.6 L906.8,841.6 L907.3,846.9Z M911.2,838.7 L916.3,837.6 L914.7,842.6Z M921.5,836.5 L926.5,835.4 L925.0,840.4Z M931.7,834.3 L936.8,833.2 L935.2,838.2Z M942.0,832.1 L947.1,831.0 L945.5,836.0Z M952.3,829.9 L957.3,828.8 L955.8,833.8Z M962.5,827.7 L967.6,826.6 L966.0,831.7Z M972.8,825.5 L977.9,824.4 L976.3,829.5Z M983.1,823.3 L988.2,822.2 L986.6,827.3Z M993.3,821.1 L998.4,820.0 L996.8,825.1Z M1003.6,818.9 L1008.7,817.8 L1007.1,822.9Z M1013.9,816.7 L1019.0,815.7 L1017.4,820.7Z M1024.1,814.5 L1028.9,812.5 L1028.3,817.7Z M1033.8,810.4 L1038.6,808.4 L1038.0,813.6Z M1039.8,803.2 L1041.1,798.1 L1044.9,801.8Z M1042.4,793.0 L1043.6,787.9 L1047.4,791.6Z M1044.9,782.8 L1046.2,777.8 L1050.0,781.4Z M1048.8,773.6 L1053.1,770.6 L1053.6,775.9Z M1057.5,767.6 L1061.7,764.6 L1062.2,769.9Z M1066.1,761.6 L1070.4,758.7 L1070.8,763.9Z M1074.6,755.5 L1077.8,751.4 L1079.8,756.3Z M1081.1,747.2 L1084.3,743.1 L1086.3,748.0Z M1087.6,739.0 L1090.8,734.9 L1092.8,739.8Z M1094.0,730.7 L1097.2,726.6 L1099.3,731.5Z M1098.5,721.4 L1099.7,716.4 L1103.6,720.0Z M1093.9,713.2 L1090.2,709.5 L1095.3,708.1Z M1086.5,705.8 L1082.8,702.1 L1087.9,700.7Z M1079.1,698.4 L1075.4,694.7 L1080.5,693.3Z M1071.6,690.9 L1068.0,687.3 L1073.1,685.8Z M1064.2,683.5 L1060.5,679.8 L1065.6,678.4Z M1056.8,676.1 L1053.1,672.4 L1058.2,671.0Z M1051.6,668.0 L1052.7,662.9 L1056.7,666.4Z M1053.8,657.7 L1054.9,652.7 L1058.9,656.2Z M1056.4,647.6 L1058.0,642.6 L1061.5,646.5Z M1059.7,637.6 L1061.3,632.7 L1064.8,636.6Z M1065.0,629.0 L1069.0,625.6 L1070.0,630.8Z M1073.0,622.2 L1077.0,618.8 L1078.0,624.0Z M1084.2,614.5 L1079.1,613.7 L1082.3,609.5Z M1073.8,613.0 L1068.7,612.2 L1071.9,608.0Z M1063.5,613.2 L1058.5,614.5 L1059.9,609.4Z M1053.3,615.8 L1048.3,617.0 L1049.7,611.9Z M1043.1,616.6 L1038.0,615.6 L1041.5,611.6Z M1033.7,612.9 L1029.8,609.4 L1034.9,607.7Z M1025.9,605.8 L1022.1,602.3 L1027.1,600.7Z M1018.1,598.8 L1014.3,595.3 L1019.3,593.6Z M1009.1,593.7 L1004.3,591.6 L1008.5,588.4Z M999.3,590.3 L994.1,590.6 L996.5,585.8Z M988.8,590.9 L983.6,591.2 L986.0,586.4Z M978.3,591.5 L973.1,591.8 L975.5,587.0Z M967.9,592.0 L962.7,592.3 L965.0,587.6Z M957.4,592.2 L952.2,592.1 L954.9,587.5Z M946.9,592.0 L941.7,591.8 L944.4,587.3Z M936.4,591.7 L931.2,591.6 L933.9,587.1Z M925.9,591.5 L920.7,591.4 L923.4,586.9Z M915.4,591.3 L910.2,591.2 L912.9,586.6Z M904.9,590.6 L899.7,590.0 L902.8,585.7Z M894.5,589.5 L889.3,589.0 L892.3,584.7Z M884.0,588.4 L878.8,587.9 L881.9,583.6Z M873.6,587.3 L868.4,586.8 L871.5,582.5Z M863.1,586.3 L858.0,585.7 L861.0,581.4Z M852.9,584.3 L848.0,582.5 L852.0,579.1Z M843.0,580.8 L838.1,579.0 L842.1,575.6Z M833.1,577.3 L828.2,575.6 L832.2,572.1Z M823.0,574.2 L818.6,571.4 L823.3,569.0Z M814.2,568.5 L809.8,565.7 L814.5,563.2Z M805.4,562.7 L801.0,559.9 L805.7,557.5Z M796.6,557.0 L792.2,554.2 L796.9,551.7Z M787.8,551.2 L783.5,548.4 L788.2,546.0Z M779.0,545.5 L774.7,542.7 L779.4,540.2Z M770.2,539.8 L765.9,536.9 L770.6,534.5Z M768.2,543.7 L769.3,548.8 L764.2,547.3Z M764.9,552.9 L762.0,557.3 L759.6,552.5Z M767.7,560.2 L771.9,563.3 L767.1,565.4Z M776.2,566.4 L780.3,569.5 L775.5,571.7Z M784.6,572.6 L788.8,575.7 L784.0,577.9Z M793.0,578.9 L797.2,582.0 L792.4,584.1Z M801.5,585.1 L805.7,588.2 L800.9,590.4Z M809.9,591.4 L814.1,594.4 L809.3,596.6Z M818.4,597.6 L822.6,600.7 L817.7,602.8Z M818.2,600.9 L813.0,600.7 L815.8,596.2Z M807.7,600.6 L802.5,600.5 L805.3,595.9Z M797.0,599.6 L793.0,602.9 L792.0,597.7Z M788.9,606.3 L785.0,609.7 L784.0,604.5Z M780.9,613.1 L776.9,616.4 L776.0,611.2Z M772.9,619.8 L768.9,623.2 L767.9,618.0Z M764.8,626.6 L760.9,629.9 L759.9,624.8Z M756.9,633.8 L751.8,633.1 L754.9,628.9Z M748.8,631.4 L751.6,627.0 L754.1,631.7Z M754.4,622.6 L757.2,618.2 L759.7,622.8Z M760.1,613.7 L762.9,609.3 L765.3,614.0Z M758.4,605.8 L754.5,602.3 L759.6,600.6Z M750.6,598.7 L746.8,595.2 L751.8,593.5Z M742.9,591.6 L739.1,588.1 L744.1,586.4Z M735.2,584.5 L731.3,580.9 L736.4,579.3Z M727.4,577.4 L723.6,573.8 L728.6,572.2Z M719.7,570.3 L715.9,566.7 L720.9,565.1Z M712.0,563.1 L708.2,559.6 L713.2,558.0Z M704.3,556.0 L700.4,552.5 L705.5,550.9Z M696.5,548.9 L692.7,545.4 L697.7,543.8Z M688.8,541.8 L685.0,538.3 L690.0,536.7Z M679.6,539.6 L674.4,539.7 L676.9,535.0Z M669.1,539.8 L663.9,539.9 L666.4,535.3Z M658.6,540.0 L653.4,540.1 L655.9,535.5Z M648.1,540.3 L642.9,540.4 L645.4,535.7Z M637.6,540.5 L632.4,540.6 L634.9,535.9Z M627.2,540.7 L623.2,544.1 L622.2,539.0Z M619.2,547.6 L615.3,551.0 L614.2,545.8Z M611.3,554.5 L607.4,557.9 L606.3,552.7Z M603.4,561.4 L599.4,564.8 L598.4,559.6Z M595.4,568.3 L591.5,571.7 L590.5,566.5Z M587.5,575.1 L583.6,578.6 L582.5,573.4Z M579.6,582.0 L575.6,585.4 L574.6,580.3Z M571.6,588.9 L567.7,592.3 L566.7,587.1Z M563.7,595.8 L559.8,599.2 L558.7,594.0Z M555.7,602.5 L550.8,604.4 L551.7,599.1Z M545.9,606.2 L541.0,608.0 L541.8,602.8Z M536.0,607.5 L531.0,606.0 L534.8,602.4Z M525.9,604.4 L521.0,602.9 L524.8,599.3Z M515.9,601.3 L510.9,599.8 L514.8,596.1Z M505.9,598.2 L500.9,596.6 L504.8,593.0Z M495.9,595.1 L490.9,593.5 L494.7,589.9Z M487.4,596.1 L484.8,600.6 L482.1,596.0Z M482.2,605.1 L479.6,609.6 L476.9,605.1Z M476.9,614.2 L474.3,618.7 L471.6,614.2Z M471.6,623.3 L469.0,627.8 L466.4,623.3Z M466.5,632.7 L461.3,632.7 L463.9,628.1Z M456.0,632.7 L450.8,632.7 L453.4,628.1Z M445.5,632.7 L440.3,632.7 L442.9,628.1Z M435.8,635.1 L431.7,638.2 L431.0,632.9Z M427.4,641.3 L423.2,644.4 L422.6,639.2Z M419.0,647.6 L414.8,650.7 L414.2,645.5Z M410.6,653.9 L406.4,657.0 L405.7,651.8Z M402.2,660.2 L398.0,663.3 L397.3,658.0Z" fill="#35a32f"/>
<path d="M199.0,374.4 C203.5,376.3 210.9,382.9 226.2,385.9 C241.5,388.9 276.0,388.4 291.0,392.2 C306.0,396.0 311.6,403.7 316.1,408.9 C320.6,414.1 315.1,415.8 318.2,423.5 C321.3,431.2 331.8,445.6 334.9,454.9 C338.0,464.1 332.5,468.7 337.0,479.0 C341.5,489.3 355.5,509.6 362.1,516.6 C368.7,523.6 373.6,516.6 376.7,520.8 C379.8,525.0 377.1,538.2 380.9,541.7 C384.7,545.2 395.3,539.6 399.7,541.7 C404.1,543.8 406.5,550.5 407.0,554.3 C407.5,558.1 402.6,561.2 402.8,564.7 C403.0,568.2 407.6,570.0 408.1,575.2 C408.6,580.4 409.5,589.8 406.0,596.1 C402.5,602.4 392.1,606.5 387.2,612.8 C382.3,619.1 378.4,628.1 376.7,633.7 C374.9,639.3 379.1,641.6 376.7,646.3 C374.3,651.0 364.2,653.1 362.1,662.0 C360.0,670.9 365.9,692.6 364.2,699.6 C362.4,706.6 356.5,698.9 351.6,703.8 C346.7,708.7 337.7,724.7 334.9,728.9" fill="none" stroke="#3b82c4" stroke-width="1.1"/>
<path d="M334.9,728.9 C328.6,726.5 308.4,716.0 297.3,714.3 C286.2,712.5 272.9,714.9 268.0,718.4 C263.1,721.9 266.1,727.9 268.0,735.2 C269.9,742.5 277.9,754.4 279.5,762.4 C281.1,770.4 280.4,778.2 277.4,783.3 C274.4,788.3 270.6,793.1 261.7,792.7 C252.8,792.4 234.5,784.7 224.1,781.2 C213.7,777.7 203.2,773.4 199.0,771.8" fill="none" stroke="#3b82c4" stroke-width="1.1"/>
<path d="M398.7,209.2 C397.6,212.0 393.1,220.3 392.4,225.9 C391.7,231.5 395.4,235.6 394.5,242.6 C393.6,249.6 389.8,260.4 387.2,267.7 C384.6,275.0 379.9,281.8 378.8,286.5 C377.8,291.2 381.6,291.6 380.9,296.0 C380.2,300.4 374.2,306.4 374.6,312.7 C375.0,319.0 380.7,326.6 383.0,333.6 C385.3,340.6 389.2,346.1 388.2,354.5 C387.1,362.9 380.3,372.7 376.7,383.8 C373.1,394.9 369.8,412.3 366.3,421.4 C362.8,430.5 357.2,431.8 355.8,438.2 C354.4,444.6 357.3,453.2 358.0,460.0 C358.7,466.8 358.3,474.8 360.0,479.0 C361.7,483.2 366.2,480.8 368.3,485.3 C370.4,489.8 370.9,499.8 372.5,506.2 C374.1,512.6 376.9,521.0 377.8,524.0" fill="none" stroke="#3b82c4" stroke-width="1.1"/>
<path d="M559.2,255.2 C560.1,259.0 560.7,271.6 564.4,278.2 C568.1,284.8 574.9,287.8 581.2,294.9 C587.5,302.0 596.2,313.2 602.1,321.1 C608.0,329.0 618.8,334.0 616.7,342.0 C614.6,350.0 598.2,359.8 589.5,369.2 C580.8,378.6 572.1,389.3 564.4,398.4 C556.7,407.4 549.8,415.5 543.5,423.5 C537.2,431.5 533.8,440.6 526.8,446.5 C519.8,452.4 509.4,453.7 501.7,459.1 C494.0,464.5 487.8,471.5 480.8,479.0 C473.8,486.5 466.9,498.7 459.9,504.1 C452.9,509.5 444.1,504.4 439.0,511.4 C433.9,518.4 433.8,535.3 429.0,545.9 C424.2,556.5 413.3,570.3 410.2,575.2" fill="none" stroke="#3b82c4" stroke-width="1.1"/>
<path d="M651.2,236.4 C652.1,240.2 656.2,253.5 656.4,259.4 C656.6,265.3 654.6,265.8 652.3,271.9 C650.0,278.0 644.5,289.2 642.8,296.0 C641.0,302.8 643.4,308.9 641.8,312.7 C640.2,316.5 634.4,315.5 633.4,319.0 C632.4,322.5 637.2,330.1 635.5,333.6 C633.8,337.1 626.1,338.5 623.0,339.9 C619.9,341.3 617.8,341.6 616.7,342.0" fill="none" stroke="#3b82c4" stroke-width="1.1"/>
<path d="M470.4,777.0 C471.4,773.2 473.8,759.0 476.6,754.0 C479.4,749.0 480.8,743.9 487.1,746.7 C493.4,749.5 504.9,767.1 514.3,770.7 C523.7,774.4 531.6,768.6 543.5,768.6 C555.4,768.6 574.2,768.6 585.4,770.7 C596.5,772.8 604.5,777.0 610.4,781.2 C616.3,785.4 619.8,791.3 620.9,795.8 C622.0,800.3 622.6,802.1 616.7,808.4 C610.8,814.7 591.3,827.1 585.4,833.4 C579.5,839.7 581.9,843.9 581.2,846.0" fill="none" stroke="#3b82c4" stroke-width="1.1"/>
<path d="M334.9,730.0 C337.0,733.3 345.3,742.3 347.4,749.8 C349.5,757.3 349.8,766.5 347.4,774.9 C345.0,783.3 335.9,791.6 332.8,800.0 C329.7,808.4 326.5,817.4 328.6,825.1 C330.7,832.8 342.6,842.5 345.4,846.0" fill="none" stroke="#3b82c4" stroke-width="1.1"/>
<path d="M439.0,823.0 C443.2,819.9 459.2,811.2 464.1,804.2 C469.0,797.2 467.2,785.9 468.3,781.2 C469.4,776.5 470.0,776.9 470.4,776.0" fill="none" stroke="#3b82c4" stroke-width="1.1"/>
<polygon points="478,281.8 497.3,285.9 499,268 500,255.8 495.9,254.4 484.9,266.7" fill="#8dbde0" stroke="#a9cfe9" stroke-width="1.5" stroke-linejoin="round"/>
<polygon points="501,248 508,243 516,240 511,252 506,254" fill="#8dbde0" stroke="#a9cfe9" stroke-width="1.5" stroke-linejoin="round"/>
<polygon points="474,294 483.6,305 484.3,287.2 480.8,288.6" fill="#8dbde0" stroke="#a9cfe9" stroke-width="1.5" stroke-linejoin="round"/>
<polygon points="1075,325 1090,323 1100,330 1092,338 1080,336" fill="#8dbde0" stroke="#a9cfe9" stroke-width="1.5" stroke-linejoin="round"/>
<polygon points="900,410 912,404 922,406 914,414" fill="#8dbde0" stroke="#a9cfe9" stroke-width="1.5" stroke-linejoin="round"/>
<polygon points="762,386 767,384 768,398 762,399" fill="#8dbde0" stroke="#a9cfe9" stroke-width="1.5" stroke-linejoin="round"/>
<polygon points="871,266 875,270 876,279 870,278" fill="#8dbde0" stroke="#a9cfe9" stroke-width="1.5" stroke-linejoin="round"/>
<polygon points="580,265 590,266 588,273 583,272" fill="#8dbde0" stroke="#a9cfe9" stroke-width="1.5" stroke-linejoin="round"/>
<polygon points="1012,436 1022,430 1028,440 1022,444" fill="#8dbde0" stroke="#a9cfe9" stroke-width="1.5" stroke-linejoin="round"/>
<polygon points="1083,480 1092,478 1102,483 1090,485" fill="#8dbde0" stroke="#a9cfe9" stroke-width="1.5" stroke-linejoin="round"/>
<polygon points="1137,495 1145,493 1150,498 1140,499" fill="#8dbde0" stroke="#a9cfe9" stroke-width="1.5" stroke-linejoin="round"/>
<path d="M444.2,209.2 H451.8 L448,215 Z" fill="#2c7fc0" stroke="#0d2230" stroke-width="1.1" stroke-linejoin="round"/>
<path d="M444.2,217.2 H451.8 L448,223 Z" fill="#2c7fc0" stroke="#0d2230" stroke-width="1.1" stroke-linejoin="round"/>
<path d="M434.2,238.2 H441.8 L438,244 Z" fill="#2c7fc0" stroke="#0d2230" stroke-width="1.1" stroke-linejoin="round"/>
<path d="M414.2,266.2 H421.8 L418,272 Z" fill="#2c7fc0" stroke="#0d2230" stroke-width="1.1" stroke-linejoin="round"/>
<path d="M416.2,288.2 H423.8 L420,294 Z" fill="#2c7fc0" stroke="#0d2230" stroke-width="1.1" stroke-linejoin="round"/>
<path d="M505.2,244.2 H512.8 L509,250 Z" fill="#2c7fc0" stroke="#0d2230" stroke-width="1.1" stroke-linejoin="round"/>
<path d="M485.2,269.2 H492.8 L489,275 Z" fill="#2c7fc0" stroke="#0d2230" stroke-width="1.1" stroke-linejoin="round"/>
<path d="M475.2,294.2 H482.8 L479,300 Z" fill="#2c7fc0" stroke="#0d2230" stroke-width="1.1" stroke-linejoin="round"/>
<path d="M582.2,266.2 H589.8 L586,272 Z" fill="#2c7fc0" stroke="#0d2230" stroke-width="1.1" stroke-linejoin="round"/>
<path d="M513.2,337.2 H520.8 L517,343 Z" fill="#2c7fc0" stroke="#0d2230" stroke-width="1.1" stroke-linejoin="round"/>
<path d="M534.2,324.2 H541.8 L538,330 Z" fill="#2c7fc0" stroke="#0d2230" stroke-width="1.1" stroke-linejoin="round"/>
<path d="M668.2,314.2 H675.8 L672,320 Z" fill="#2c7fc0" stroke="#0d2230" stroke-width="1.1" stroke-linejoin="round"/>
<path d="M747.2,283.2 H754.8 L751,289 Z" fill="#2c7fc0" stroke="#0d2230" stroke-width="1.1" stroke-linejoin="round"/>
<path d="M751.2,298.2 H758.8 L755,304 Z" fill="#2c7fc0" stroke="#0d2230" stroke-width="1.1" stroke-linejoin="round"/>
<path d="M761.2,391.2 H768.8 L765,397 Z" fill="#2c7fc0" stroke="#0d2230" stroke-width="1.1" stroke-linejoin="round"/>
<path d="M869.2,270.2 H876.8 L873,276 Z" fill="#2c7fc0" stroke="#0d2230" stroke-width="1.1" stroke-linejoin="round"/>
<path d="M918.2,379.2 H925.8 L922,385 Z" fill="#2c7fc0" stroke="#0d2230" stroke-width="1.1" stroke-linejoin="round"/>
<path d="M908.2,406.2 H915.8 L912,412 Z" fill="#2c7fc0" stroke="#0d2230" stroke-width="1.1" stroke-linejoin="round"/>
<path d="M1046.2,281.2 H1053.8 L1050,287 Z" fill="#2c7fc0" stroke="#0d2230" stroke-width="1.1" stroke-linejoin="round"/>
<path d="M1082.2,327.2 H1089.8 L1086,333 Z" fill="#2c7fc0" stroke="#0d2230" stroke-width="1.1" stroke-linejoin="round"/>
<path d="M1009.2,376.2 H1016.8 L1013,382 Z" fill="#2c7fc0" stroke="#0d2230" stroke-width="1.1" stroke-linejoin="round"/>
<path d="M1013.2,397.2 H1020.8 L1017,403 Z" fill="#2c7fc0" stroke="#0d2230" stroke-width="1.1" stroke-linejoin="round"/>
<path d="M1018.2,432.2 H1025.8 L1022,438 Z" fill="#2c7fc0" stroke="#0d2230" stroke-width="1.1" stroke-linejoin="round"/>
<path d="M1089.2,479.2 H1096.8 L1093,485 Z" fill="#2c7fc0" stroke="#0d2230" stroke-width="1.1" stroke-linejoin="round"/>
<path d="M1102.2,521.2 H1109.8 L1106,527 Z" fill="#2c7fc0" stroke="#0d2230" stroke-width="1.1" stroke-linejoin="round"/>
<path d="M1132.2,530.2 H1139.8 L1136,536 Z" fill="#2c7fc0" stroke="#0d2230" stroke-width="1.1" stroke-linejoin="round"/>
<path d="M1098.2,550.2 H1105.8 L1102,556 Z" fill="#2c7fc0" stroke="#0d2230" stroke-width="1.1" stroke-linejoin="round"/>
<path d="M1140.2,492.2 H1147.8 L1144,498 Z" fill="#2c7fc0" stroke="#0d2230" stroke-width="1.1" stroke-linejoin="round"/>
<path d="M1142.2,314.2 H1149.8 L1146,320 Z" fill="#2c7fc0" stroke="#0d2230" stroke-width="1.1" stroke-linejoin="round"/>
<g clip-path="url(#ct)">
<polyline class="tc" points="393.9,401.3 631.3,253.0"/>
<polyline class="tc" points="398.4,408.6 635.8,260.2"/>
<polyline class="tc" points="402.9,415.8 640.3,267.4"/>
<polyline class="tc" points="407.4,423.0 644.8,274.6"/>
<polyline class="tc" points="411.9,430.2 649.4,281.8"/>
<polyline class="tc" points="416.4,437.4 653.9,289.0"/>
<polyline class="tc" points="420.9,444.6 658.4,296.2"/>
<polyline class="tc" points="425.4,451.8 662.9,303.4"/>
<polyline class="tc" points="429.9,459.0 667.4,310.6"/>
<polyline class="tc" points="434.4,466.2 671.9,317.8"/>
<polyline class="tc" points="438.9,473.4 676.4,325.1"/>
<polyline class="tc" points="443.4,480.6 680.9,332.3"/>
<polyline class="tc" points="447.9,487.8 685.4,339.5"/>
<polyline class="tc" points="452.4,495.1 689.9,346.7"/>
<polyline class="tc" points="456.9,502.3 694.4,353.9"/>
<polyline class="tc" points="461.4,509.5 698.9,361.1"/>
<polyline class="tc" points="465.9,516.7 703.4,368.3"/>
<polyline class="tc" points="470.5,523.9 707.9,375.5"/>
<polyline class="tc" points="475.0,531.1 712.4,382.7"/>
<polyline class="tc" points="393.9,401.3 478.7,537.0"/>
<polyline class="tc" points="404.1,395.0 488.8,530.7"/>
<polyline class="tc" points="414.2,388.6 499.0,524.3"/>
<polyline class="tc" points="424.4,382.3 509.2,518.0"/>
<polyline class="tc" points="434.6,375.9 519.4,511.6"/>
<polyline class="tc" points="444.8,369.5 529.5,505.2"/>
<polyline class="tc" points="454.9,363.2 539.7,498.9"/>
<polyline class="tc" points="465.1,356.8 549.9,492.5"/>
<polyline class="tc" points="475.3,350.5 560.1,486.2"/>
<polyline class="tc" points="485.5,344.1 570.3,479.8"/>
<polyline class="tc" points="495.6,337.8 580.4,473.4"/>
<polyline class="tc" points="505.8,331.4 590.6,467.1"/>
<polyline class="tc" points="516.0,325.0 600.8,460.7"/>
<polyline class="tc" points="526.2,318.7 611.0,454.4"/>
<polyline class="tc" points="536.4,312.3 621.1,448.0"/>
<polyline class="tc" points="546.5,306.0 631.3,441.6"/>
<polyline class="tc" points="556.7,299.6 641.5,435.3"/>
<polyline class="tc" points="566.9,293.2 651.7,428.9"/>
<polyline class="tc" points="577.1,286.9 661.8,422.6"/>
<polyline class="tc" points="587.2,280.5 672.0,416.2"/>
<polyline class="tc" points="597.4,274.2 682.2,409.9"/>
<polyline class="tc" points="607.6,267.8 692.4,403.5"/>
<polyline class="tc" points="617.8,261.4 702.6,397.1"/>
<polyline class="tc" points="627.9,255.1 712.7,390.8"/>
<polyline class="tw" points="393.9,401.3 631.3,253.0"/>
<polyline class="tw" points="398.4,408.6 635.8,260.2"/>
<polyline class="tw" points="402.9,415.8 640.3,267.4"/>
<polyline class="tw" points="407.4,423.0 644.8,274.6"/>
<polyline class="tw" points="411.9,430.2 649.4,281.8"/>
<polyline class="tw" points="416.4,437.4 653.9,289.0"/>
<polyline class="tw" points="420.9,444.6 658.4,296.2"/>
<polyline class="tw" points="425.4,451.8 662.9,303.4"/>
<polyline class="tw" points="429.9,459.0 667.4,310.6"/>
<polyline class="tw" points="434.4,466.2 671.9,317.8"/>
<polyline class="tw" points="438.9,473.4 676.4,325.1"/>
<polyline class="tw" points="443.4,480.6 680.9,332.3"/>
<polyline class="tw" points="447.9,487.8 685.4,339.5"/>
<polyline class="tw" points="452.4,495.1 689.9,346.7"/>
<polyline class="tw" points="456.9,502.3 694.4,353.9"/>
<polyline class="tw" points="461.4,509.5 698.9,361.1"/>
<polyline class="tw" points="465.9,516.7 703.4,368.3"/>
<polyline class="tw" points="470.5,523.9 707.9,375.5"/>
<polyline class="tw" points="475.0,531.1 712.4,382.7"/>
<polyline class="tw" points="393.9,401.3 478.7,537.0"/>
<polyline class="tw" points="404.1,395.0 488.8,530.7"/>
<polyline class="tw" points="414.2,388.6 499.0,524.3"/>
<polyline class="tw" points="424.4,382.3 509.2,518.0"/>
<polyline class="tw" points="434.6,375.9 519.4,511.6"/>
<polyline class="tw" points="444.8,369.5 529.5,505.2"/>
<polyline class="tw" points="454.9,363.2 539.7,498.9"/>
<polyline class="tw" points="465.1,356.8 549.9,492.5"/>
<polyline class="tw" points="475.3,350.5 560.1,486.2"/>
<polyline class="tw" points="485.5,344.1 570.3,479.8"/>
<polyline class="tw" points="495.6,337.8 580.4,473.4"/>
<polyline class="tw" points="505.8,331.4 590.6,467.1"/>
<polyline class="tw" points="516.0,325.0 600.8,460.7"/>
<polyline class="tw" points="526.2,318.7 611.0,454.4"/>
<polyline class="tw" points="536.4,312.3 621.1,448.0"/>
<polyline class="tw" points="546.5,306.0 631.3,441.6"/>
<polyline class="tw" points="556.7,299.6 641.5,435.3"/>
<polyline class="tw" points="566.9,293.2 651.7,428.9"/>
<polyline class="tw" points="577.1,286.9 661.8,422.6"/>
<polyline class="tw" points="587.2,280.5 672.0,416.2"/>
<polyline class="tw" points="597.4,274.2 682.2,409.9"/>
<polyline class="tw" points="607.6,267.8 692.4,403.5"/>
<polyline class="tw" points="617.8,261.4 702.6,397.1"/>
<polyline class="tw" points="627.9,255.1 712.7,390.8"/>
</g>
<g clip-path="url(#cs)"><g clip-path="url(#cu)">
<polyline class="tc" points="501.5,469.8 627.0,436.2"/>
<polyline class="tc" points="503.1,476.1 628.7,442.5"/>
<polyline class="tc" points="504.8,482.4 630.4,448.8"/>
<polyline class="tc" points="506.5,488.7 632.1,455.0"/>
<polyline class="tc" points="508.2,495.0 633.7,461.3"/>
<polyline class="tc" points="509.9,501.2 635.4,467.6"/>
<polyline class="tc" points="511.5,507.5 637.1,473.9"/>
<polyline class="tc" points="513.2,513.8 638.8,480.1"/>
<polyline class="tc" points="514.9,520.1 640.5,486.4"/>
<polyline class="tc" points="516.6,526.4 642.2,492.7"/>
<polyline class="tc" points="501.5,469.8 517.0,527.8"/>
<polyline class="tc" points="516.9,465.7 532.4,523.7"/>
<polyline class="tc" points="532.4,461.6 547.9,519.5"/>
<polyline class="tc" points="547.8,457.4 563.3,515.4"/>
<polyline class="tc" points="563.3,453.3 578.8,511.2"/>
<polyline class="tc" points="578.7,449.1 594.3,507.1"/>
<polyline class="tc" points="594.2,445.0 609.7,503.0"/>
<polyline class="tc" points="609.6,440.9 625.2,498.8"/>
<polyline class="tc" points="625.1,436.7 640.6,494.7"/>
<polyline class="tw" points="501.5,469.8 627.0,436.2"/>
<polyline class="tw" points="503.1,476.1 628.7,442.5"/>
<polyline class="tw" points="504.8,482.4 630.4,448.8"/>
<polyline class="tw" points="506.5,488.7 632.1,455.0"/>
<polyline class="tw" points="508.2,495.0 633.7,461.3"/>
<polyline class="tw" points="509.9,501.2 635.4,467.6"/>
<polyline class="tw" points="511.5,507.5 637.1,473.9"/>
<polyline class="tw" points="513.2,513.8 638.8,480.1"/>
<polyline class="tw" points="514.9,520.1 640.5,486.4"/>
<polyline class="tw" points="516.6,526.4 642.2,492.7"/>
<polyline class="tw" points="501.5,469.8 517.0,527.8"/>
<polyline class="tw" points="516.9,465.7 532.4,523.7"/>
<polyline class="tw" points="532.4,461.6 547.9,519.5"/>
<polyline class="tw" points="547.8,457.4 563.3,515.4"/>
<polyline class="tw" points="563.3,453.3 578.8,511.2"/>
<polyline class="tw" points="578.7,449.1 594.3,507.1"/>
<polyline class="tw" points="594.2,445.0 609.7,503.0"/>
<polyline class="tw" points="609.6,440.9 625.2,498.8"/>
<polyline class="tw" points="625.1,436.7 640.6,494.7"/>
</g><g clip-path="url(#cl)">
<polyline class="tc" points="532.0,457.5 638.5,532.0"/>
<polyline class="tc" points="528.3,462.8 634.8,537.4"/>
<polyline class="tc" points="524.6,468.1 631.1,542.7"/>
<polyline class="tc" points="520.9,473.4 627.3,548.0"/>
<polyline class="tc" points="517.1,478.8 623.6,553.3"/>
<polyline class="tc" points="513.4,484.1 619.9,558.7"/>
<polyline class="tc" points="509.7,489.4 616.2,564.0"/>
<polyline class="tc" points="505.9,494.7 612.4,569.3"/>
<polyline class="tc" points="502.2,500.1 608.7,574.6"/>
<polyline class="tc" points="498.5,505.4 605.0,580.0"/>
<polyline class="tc" points="494.8,510.7 601.2,585.3"/>
<polyline class="tc" points="491.0,516.0 597.5,590.6"/>
<polyline class="tc" points="487.3,521.4 593.8,595.9"/>
<polyline class="tc" points="483.6,526.7 590.1,601.3"/>
<polyline class="tc" points="479.8,532.0 586.3,606.6"/>
<polyline class="tc" points="476.1,537.3 582.6,611.9"/>
<polyline class="tc" points="472.4,542.7 578.9,617.2"/>
<polyline class="tc" points="468.7,548.0 575.1,622.6"/>
<polyline class="tc" points="464.9,553.3 571.4,627.9"/>
<polyline class="tc" points="461.2,558.6 567.7,633.2"/>
<polyline class="tc" points="457.5,564.0 564.0,638.5"/>
<polyline class="tc" points="532.0,457.5 457.5,564.0"/>
<polyline class="tc" points="543.5,465.5 468.9,572.0"/>
<polyline class="tc" points="555.0,473.5 480.4,580.0"/>
<polyline class="tc" points="566.4,481.6 491.9,588.1"/>
<polyline class="tc" points="577.9,489.6 503.3,596.1"/>
<polyline class="tc" points="589.4,497.6 514.8,604.1"/>
<polyline class="tc" points="600.8,505.7 526.3,612.1"/>
<polyline class="tc" points="612.3,513.7 537.7,620.2"/>
<polyline class="tc" points="623.8,521.7 549.2,628.2"/>
<polyline class="tc" points="635.3,529.7 560.7,636.2"/>
<polyline class="tw" points="532.0,457.5 638.5,532.0"/>
<polyline class="tw" points="528.3,462.8 634.8,537.4"/>
<polyline class="tw" points="524.6,468.1 631.1,542.7"/>
<polyline class="tw" points="520.9,473.4 627.3,548.0"/>
<polyline class="tw" points="517.1,478.8 623.6,553.3"/>
<polyline class="tw" points="513.4,484.1 619.9,558.7"/>
<polyline class="tw" points="509.7,489.4 616.2,564.0"/>
<polyline class="tw" points="505.9,494.7 612.4,569.3"/>
<polyline class="tw" points="502.2,500.1 608.7,574.6"/>
<polyline class="tw" points="498.5,505.4 605.0,580.0"/>
<polyline class="tw" points="494.8,510.7 601.2,585.3"/>
<polyline class="tw" points="491.0,516.0 597.5,590.6"/>
<polyline class="tw" points="487.3,521.4 593.8,595.9"/>
<polyline class="tw" points="483.6,526.7 590.1,601.3"/>
<polyline class="tw" points="479.8,532.0 586.3,606.6"/>
<polyline class="tw" points="476.1,537.3 582.6,611.9"/>
<polyline class="tw" points="472.4,542.7 578.9,617.2"/>
<polyline class="tw" points="468.7,548.0 575.1,622.6"/>
<polyline class="tw" points="464.9,553.3 571.4,627.9"/>
<polyline class="tw" points="461.2,558.6 567.7,633.2"/>
<polyline class="tw" points="457.5,564.0 564.0,638.5"/>
<polyline class="tw" points="532.0,457.5 457.5,564.0"/>
<polyline class="tw" points="543.5,465.5 468.9,572.0"/>
<polyline class="tw" points="555.0,473.5 480.4,580.0"/>
<polyline class="tw" points="566.4,481.6 491.9,588.1"/>
<polyline class="tw" points="577.9,489.6 503.3,596.1"/>
<polyline class="tw" points="589.4,497.6 514.8,604.1"/>
<polyline class="tw" points="600.8,505.7 526.3,612.1"/>
<polyline class="tw" points="612.3,513.7 537.7,620.2"/>
<polyline class="tw" points="623.8,521.7 549.2,628.2"/>
<polyline class="tw" points="635.3,529.7 560.7,636.2"/>
</g></g>
<path class="rc" d="M199.0,115.1 C204.2,116.8 221.3,124.1 230.4,125.5 C239.5,126.9 248.5,124.5 253.4,123.5 C258.3,122.5 257.5,119.1 259.6,119.3 C261.7,119.5 259.3,123.1 265.9,124.5 C272.5,125.9 290.0,125.2 299.4,127.6 C308.8,130.0 318.2,135.4 322.4,139.1 C326.6,142.8 322.3,146.6 324.4,149.6 C326.5,152.6 331.1,153.6 334.9,156.9 C338.7,160.2 344.6,168.4 347.4,169.4 C350.2,170.4 346.7,164.1 351.6,163.2 C356.5,162.3 369.7,165.4 376.7,164.2 C383.7,163.0 389.2,156.1 393.4,155.9 C397.6,155.7 398.3,162.8 401.8,163.2 C405.3,163.5 410.5,158.0 414.3,158.0 C418.1,158.0 420.7,160.2 424.8,163.2 C428.9,166.1 433.1,170.1 439.0,175.7 C444.9,181.3 451.5,192.8 459.9,196.6 C468.3,200.4 483.6,196.2 489.2,198.7 C494.8,201.1 490.6,208.2 493.4,211.3 C496.2,214.4 500.3,219.6 505.9,217.5 C511.5,215.4 523.0,200.8 526.8,198.7 C530.6,196.6 529.9,199.4 528.9,205.0 C527.9,210.6 523.6,223.8 520.5,232.2 C517.4,240.6 511.5,250.3 510.1,255.2 C508.7,260.1 508.4,259.1 512.2,261.5 C516.0,263.9 528.6,269.5 533.1,269.8 C537.6,270.1 538.4,264.6 539.4,263.5"/>
<path class="rc" d="M378.8,196.6 C382.6,196.9 396.4,197.5 401.8,198.7 C407.2,199.9 409.4,200.8 411.2,203.9 C412.9,207.0 410.7,213.8 412.3,217.5 C413.9,221.2 418.7,221.0 420.6,225.9 C422.5,230.8 423.8,239.1 423.8,246.8 C423.8,254.5 420.1,263.7 420.6,271.9 C421.1,280.1 423.8,288.1 426.9,296.0 C430.0,303.9 432.4,309.6 439.0,319.0 C445.6,328.4 457.8,345.8 466.2,352.4 C474.6,359.0 477.0,348.6 489.2,358.7 C501.4,368.8 528.2,400.9 539.4,413.1 C550.5,425.3 551.0,426.4 556.1,431.9 C561.2,437.4 567.7,443.6 570.0,446.0"/>
<path class="rc" d="M501.7,167.8 C504.5,169.1 512.5,173.7 518.4,175.7 C524.3,177.7 531.7,177.4 537.3,179.9 C542.9,182.4 549.1,186.6 551.9,190.4 C554.7,194.2 554.7,199.8 554.0,202.9 C553.3,206.0 549.5,205.4 547.7,209.2 C546.0,213.0 544.2,221.0 543.5,225.9 C542.8,230.8 544.2,232.1 543.5,238.4 C542.8,244.7 541.8,256.9 539.4,263.5 C537.0,270.1 531.3,272.8 528.9,278.2 C526.5,283.6 525.4,289.6 524.7,296.0 C524.0,302.4 525.1,308.5 524.7,316.9 C524.4,325.3 523.0,341.3 522.6,346.2"/>
<path class="rc" d="M597.9,114.0 C596.5,115.6 591.6,119.8 589.5,123.5 C587.4,127.2 588.2,133.2 585.4,136.0 C582.6,138.8 576.3,137.6 572.8,140.2 C569.3,142.8 567.2,148.4 564.4,151.7 C561.6,155.0 561.3,157.9 556.1,160.0 C550.9,162.1 541.1,163.1 533.1,164.2 C525.1,165.2 513.2,165.7 508.0,166.3 C502.8,166.9 502.8,167.6 501.7,167.8"/>
<path class="rc" d="M564.4,151.7 C570.3,152.2 592.3,153.9 600.0,154.8 C607.7,155.7 605.2,155.7 610.4,156.9 C615.6,158.1 625.0,161.4 631.3,162.1 C637.6,162.8 640.0,160.6 648.0,161.1 C656.0,161.6 673.1,165.0 679.0,165.3 C684.9,165.7 680.4,159.7 683.2,163.2 C686.0,166.7 693.3,179.6 695.7,186.2 C698.1,192.8 696.0,198.4 697.8,202.9 C699.5,207.4 701.7,207.8 706.2,213.4 C710.7,219.0 722.2,230.5 725.0,236.4 C727.8,242.3 723.8,245.3 722.9,248.9 C722.0,252.5 729.6,255.4 719.8,257.9 C710.0,260.4 673.2,262.9 663.9,263.9"/>
<path class="rc" d="M600.0,155.9 C599.0,156.8 595.1,159.2 593.7,161.1 C592.3,163.0 593.3,165.7 591.6,167.4 C589.9,169.1 582.9,169.8 583.3,171.5 C583.6,173.2 592.0,175.4 593.7,177.8 C595.4,180.2 592.0,182.0 593.7,186.2 C595.5,190.4 602.1,199.1 604.2,202.9 C606.3,206.7 609.4,206.4 606.3,209.2 C603.2,212.0 590.3,216.5 585.4,219.6 C580.5,222.7 577.7,225.9 577.0,228.0 C576.3,230.1 573.5,230.8 581.2,232.2 C588.9,233.6 612.5,236.2 623.0,236.4 C633.5,236.6 640.4,233.7 643.9,233.2"/>
<path class="rc" d="M547.7,225.9 C550.5,223.8 558.1,214.8 564.4,213.4 C570.7,212.0 581.9,216.8 585.4,217.5"/>
<path class="rc" d="M564.4,213.4 C564.4,216.2 566.5,226.6 564.4,230.1 C562.3,233.6 554.0,233.6 551.9,234.3"/>
<path class="rc" d="M551.9,234.3 C555.4,234.3 566.5,233.6 572.8,234.3 C579.1,235.0 584.3,235.6 589.5,238.4 C594.7,241.2 601.4,247.5 604.2,251.0 C607.0,254.5 607.0,255.6 606.3,259.4 C605.6,263.2 598.6,270.2 600.0,274.0 C601.4,277.8 611.1,281.6 614.6,282.3 C618.1,283.0 619.1,282.7 620.9,278.2 C622.6,273.7 622.0,260.4 625.1,255.2 C628.2,250.0 635.9,249.2 639.7,246.8 C643.5,244.4 647.1,242.9 648.1,240.5 C649.1,238.1 646.4,233.6 646.0,232.2"/>
<path class="rc" d="M620.9,205.0 C625.4,208.5 642.2,221.4 648.1,225.9 C654.0,230.4 653.6,226.6 656.4,232.2 C659.2,237.8 664.4,248.8 664.8,259.4 C665.1,270.0 658.5,287.6 658.5,296.0 C658.5,304.4 663.9,307.7 665.0,310.0"/>
<path class="rc" d="M673.2,184.1 C671.1,186.2 663.4,190.3 660.6,196.6 C657.8,202.9 658.1,215.8 656.4,221.7 C654.7,227.6 651.2,230.4 650.2,232.2"/>
<path class="rc" d="M679.0,221.7 C677.3,222.8 672.8,226.2 669.0,228.0 C665.2,229.8 658.5,231.5 656.4,232.2"/>
<path class="rc" d="M706.2,174.7 C712.1,174.9 731.2,176.2 741.7,175.7 C752.2,175.2 758.5,171.8 768.9,171.5 C779.3,171.2 795.0,172.2 804.4,173.6 C813.8,175.0 819.1,177.3 825.4,179.9 C831.7,182.5 833.0,187.9 842.1,189.3 C851.2,190.7 870.3,186.0 879.7,188.3 C889.1,190.6 893.3,199.8 898.5,202.9 C903.7,206.0 907.2,204.3 911.0,207.1 C914.8,209.9 917.0,218.2 921.5,219.6 C926.0,221.0 929.5,218.2 938.2,215.4 C946.9,212.6 959.8,205.3 973.7,202.9 C987.6,200.5 1011.3,202.6 1021.8,200.8 C1032.2,199.1 1036.8,194.8 1036.4,192.4 C1036.1,190.0 1025.6,187.9 1019.7,186.2 C1013.8,184.5 1007.5,184.1 1000.9,182.0 C994.3,179.9 983.1,176.0 980.0,173.6 C976.9,171.2 979.0,168.8 982.1,167.4 C985.2,166.0 994.6,169.1 998.8,165.3 C1003.0,161.5 1006.2,150.3 1007.2,144.4 C1008.2,138.5 1008.2,132.5 1005.1,129.7 C1002.0,126.9 993.6,129.3 988.4,127.6 C983.2,125.9 977.5,121.4 973.7,119.3 C969.9,117.2 968.9,116.1 965.4,115.1 C961.9,114.0 954.9,113.3 952.8,113.0"/>
<path class="rc" d="M706.2,174.7 C708.6,173.5 715.2,170.2 720.8,167.4 C726.4,164.6 732.6,160.1 739.6,158.0 C746.6,155.9 758.4,157.8 762.6,154.8 C766.8,151.8 764.7,145.1 764.7,140.2 C764.7,135.3 764.0,128.6 762.6,125.5 C761.2,122.4 756.0,123.3 756.4,121.4 C756.8,119.5 763.3,115.2 764.7,114.0"/>
<path class="rc" d="M694.7,186.2 L706.2,174.7"/>
<path class="rc" d="M679.0,221.7 C683.5,220.6 695.8,214.7 706.2,215.4 C716.7,216.1 728.8,225.2 741.7,225.9 C754.6,226.6 771.6,218.9 783.5,219.6 C795.4,220.3 803.4,229.4 812.8,230.1 C822.2,230.8 834.8,228.0 840.0,223.8 C845.2,219.6 841.4,207.1 844.2,205.0 C847.0,202.9 844.2,208.9 856.7,211.3 C869.2,213.7 908.6,218.2 919.0,219.6"/>
<path class="rc" d="M737.5,232.2 C737.9,233.9 741.3,239.5 739.6,242.6 C737.9,245.7 729.2,249.6 727.1,251.0"/>
<path class="rc" d="M667.9,281.8 C670.9,280.8 677.1,279.5 685.8,275.8 C694.4,272.1 714.1,262.5 719.8,259.9"/>
<path class="rc" d="M669.9,281.8 C672.2,283.1 682.1,287.5 683.8,289.8 C685.4,292.1 680.5,294.8 679.8,295.8"/>
<path class="rc" d="M199.0,338.9 C212.9,343.1 260.7,356.2 282.6,364.0 C304.6,371.8 318.1,378.2 330.7,385.9 C343.2,393.6 349.5,403.7 357.9,410.0 C366.3,416.3 376.2,418.8 380.9,423.5 C385.6,428.2 385.8,432.3 386.1,438.2 C386.5,444.1 382.8,452.3 383.0,459.1 C383.2,465.9 382.3,471.9 387.2,479.0 C392.1,486.1 407.2,498.8 412.3,502.0 C417.4,505.2 417.1,498.7 418.0,498.0"/>
<path class="rc" d="M380.9,423.5 C388.4,423.0 416.1,421.3 425.8,420.4 C435.5,419.5 433.3,419.4 439.0,418.3 C444.7,417.2 456.5,414.7 460.0,414.0"/>
<path class="rc" d="M396.6,422.5 C398.5,412.6 406.4,373.5 408.1,362.9 C409.8,352.3 404.9,363.6 407.0,358.7 C409.1,353.8 415.3,339.9 420.6,333.6 C425.9,327.3 435.9,323.2 439.0,321.1"/>
<path class="rc" d="M389.3,355.6 L407.0,358.7"/>
<path class="rc" d="M408.1,362.9 C411.1,372.3 420.7,412.4 425.8,419.4 C430.9,426.4 436.8,407.1 439.0,404.7"/>
<path class="rc" d="M388.2,373.4 L403.9,377.5"/>
<path class="rc" d="M426.9,419.7 C429.9,421.8 439.1,427.8 445.0,432.0 C450.9,436.2 457.5,441.3 462.0,445.0 C466.5,448.7 470.3,452.5 472.0,454.0"/>
<path class="rc" d="M570.6,442.7 C576.5,440.2 588.2,433.3 606.3,427.7 C624.4,422.1 659.9,412.2 679.0,408.9 C698.1,405.6 709.6,407.5 720.8,407.9 C731.9,408.2 732.0,408.1 745.9,411.0 C759.8,413.9 781.4,419.0 804.4,425.6 C827.4,432.2 864.8,445.1 883.9,450.7 C903.0,456.3 900.5,453.6 919.0,459.1 C937.5,464.6 967.0,474.6 994.6,483.6 C1022.2,492.6 1058.4,508.4 1084.5,512.9 C1110.6,517.4 1139.9,511.1 1151.0,510.8"/>
<path class="rc" d="M639.3,415.1 C627.8,419.7 587.1,436.0 570.6,442.7 C554.1,449.4 548.0,449.0 540.5,455.3 C533.0,461.6 532.9,469.5 525.4,480.3 C517.9,491.1 505.8,505.2 495.4,520.4 C485.0,535.6 469.9,558.2 462.8,571.5 C455.7,584.8 456.8,593.1 452.8,600.3 C448.8,607.5 447.9,604.6 439.0,614.9 C430.1,625.2 420.9,639.2 399.7,662.0 C378.5,684.8 332.4,728.9 311.9,751.9 C291.3,774.9 288.9,784.3 276.4,800.0 C263.8,815.7 243.2,838.3 236.6,846.0"/>
<path class="rc" d="M495.5,479.0 C490.3,485.3 473.5,503.4 464.1,516.6 C454.7,529.8 445.2,547.6 439.0,558.4 C432.8,569.2 429.3,575.1 426.9,581.4 C424.5,587.7 426.6,590.2 424.8,596.1 C423.1,602.0 422.7,607.8 416.4,617.0 C410.1,626.2 392.1,645.8 387.2,651.5"/>
<path class="rc" d="M345.4,528.1 C353.7,527.7 383.8,528.9 395.0,525.9 C406.2,522.9 401.4,521.7 412.7,510.4 C424.0,499.1 442.4,476.4 463.0,458.0 C483.6,439.6 513.2,417.2 536.0,400.0 C558.8,382.8 578.5,368.7 600.0,355.0 C621.5,341.3 650.0,327.2 665.0,318.0 C680.0,308.8 685.8,303.0 690.0,300.0"/>
<path class="rc" d="M540.0,470.0 C544.2,465.0 555.8,450.8 565.0,440.0 C574.2,429.2 585.0,415.8 595.0,405.0 C605.0,394.2 614.2,385.8 625.0,375.0 C635.8,364.2 649.2,350.0 660.0,340.0 C670.8,330.0 685.0,319.2 690.0,315.0"/>
<path class="rc" d="M618.8,369.2 C624.0,371.3 640.0,377.8 650.0,382.0 C660.0,386.2 671.0,391.9 679.0,394.3 C687.0,396.7 691.9,394.0 697.8,396.4 C703.7,398.8 711.7,406.8 714.5,408.9"/>
<path class="rc" d="M478.7,348.3 C480.4,346.2 481.9,340.9 489.2,335.7 C496.5,330.5 510.8,321.9 522.6,316.9 C534.5,311.8 551.6,306.1 560.3,305.4 C569.0,304.7 570.7,309.7 574.9,312.7 C579.1,315.7 581.9,320.1 585.4,323.2 C588.9,326.3 594.1,330.1 595.8,331.5"/>
<path class="rc" d="M604.2,299.1 C605.6,303.5 610.5,318.5 612.5,325.3 C614.5,332.1 615.4,337.6 616.0,340.0"/>
<path class="rc" d="M663.9,299.8 C677.9,297.8 730.2,287.9 747.7,287.8 C765.2,287.7 761.2,291.5 768.9,299.1 C776.6,306.7 789.8,321.9 794.0,333.6 C798.2,345.3 796.8,355.6 794.0,369.2 C791.2,382.8 781.3,407.6 777.3,415.2 C773.3,422.8 771.2,415.0 770.0,415.0"/>
<path class="rc" d="M796.1,365.0 C798.5,361.0 804.4,344.3 810.7,341.0 C817.0,337.7 827.1,342.5 833.7,345.1 C840.3,347.7 848.3,351.2 850.4,356.6 C852.5,362.0 843.8,370.5 846.3,377.5 C848.8,384.5 864.4,387.9 865.1,398.4 C865.8,408.9 852.9,433.3 850.4,440.3"/>
<path class="rc" d="M817.0,339.9 C817.4,337.8 814.6,328.6 819.1,327.4 C823.6,326.2 840.0,331.7 844.2,332.6"/>
<path class="rc" d="M714.5,408.9 C711.0,412.7 696.0,423.4 693.6,431.9 C691.2,440.4 696.9,452.1 700.0,460.0 C703.1,467.9 709.4,474.1 712.5,479.0 C715.6,483.9 710.0,479.6 718.7,489.5 C727.4,499.4 756.5,530.0 764.7,538.6 C772.9,547.2 767.5,540.6 768.0,541.0"/>
<path class="rc" d="M890.2,448.6 C891.6,444.1 893.7,427.3 898.5,421.4 C903.3,415.5 915.6,414.5 919.0,413.1"/>
<path class="rc" d="M881.8,452.8 C882.1,454.6 880.8,458.9 883.9,463.3 C887.0,467.7 896.4,474.6 900.6,479.0 C904.8,483.4 905.9,487.1 909.0,489.5 C912.1,491.9 917.3,492.9 919.0,493.6"/>
<path class="rc" d="M679.0,314.8 C682.5,317.6 697.1,324.2 699.9,331.5 C702.7,338.8 699.2,353.5 695.7,358.7 C692.2,363.9 681.8,362.2 679.0,362.9"/>
<path class="rc" d="M703.8,275.8 C706.5,278.5 717.8,286.5 719.8,291.8 C721.8,297.1 715.8,303.8 715.8,307.8 C715.8,311.8 719.1,314.5 719.8,315.8"/>
<path class="rc" d="M1101.3,400.0 C1100.2,411.5 1094.7,451.6 1095.0,469.0 C1095.3,486.4 1101.9,498.6 1103.3,504.5"/>
<path class="rc" d="M1141.0,400.0 C1137.5,407.0 1126.4,431.7 1120.1,441.8 C1113.8,451.9 1102.6,455.4 1103.3,460.6 C1104.0,465.8 1116.3,475.6 1124.3,473.2 C1132.2,470.8 1146.5,450.5 1151.0,446.0"/>
<path class="rc" d="M1124.3,473.2 L1138.9,510.8"/>
<path class="rc" d="M1084.5,512.9 L1151.0,554.7"/>
<path class="rc" d="M1099.2,525.4 C1095.0,529.6 1086.3,540.9 1074.1,550.5 C1061.9,560.1 1037.5,576.9 1026.0,583.0 C1014.5,589.1 1012.4,587.7 1005.1,587.0 C997.8,586.3 985.9,580.1 982.1,578.7"/>
<path class="rc" d="M911.0,487.8 C916.6,488.3 937.2,489.4 944.5,491.0 C951.8,492.6 953.2,496.2 954.9,497.2"/>
<path class="rc" d="M911.0,410.5 L934.0,418.8"/>
<path class="rc" d="M996.7,328.4 C996.0,326.1 991.5,318.1 992.5,314.8 C993.5,311.5 998.8,310.4 1003.0,308.5 C1007.2,306.6 1014.8,305.7 1017.6,303.3 C1020.4,300.9 1016.6,294.2 1019.7,293.9 C1022.8,293.5 1027.3,300.5 1036.4,301.2 C1045.5,301.9 1062.2,296.2 1074.1,298.1 C1085.9,300.0 1097.8,308.5 1107.5,312.7 C1117.2,316.9 1125.3,321.1 1132.6,323.2 C1139.8,325.3 1147.9,324.9 1151.0,325.3"/>
<path class="rc" d="M1074.1,279.3 C1074.8,280.7 1077.9,284.8 1078.3,287.6 C1078.7,290.4 1076.5,294.6 1076.2,296.0"/>
<path class="rc" d="M1130.5,298.1 L1151.0,293.9"/>
<path class="rc" d="M1105.4,325.3 C1109.2,326.7 1123.9,333.2 1128.4,333.6 C1132.9,334.0 1131.9,328.4 1132.6,327.4"/>
<path class="rc" d="M1103.3,337.8 C1105.4,341.6 1113.1,354.5 1115.9,360.8 C1118.7,367.1 1116.6,370.9 1120.1,375.4 C1123.6,379.9 1133.3,383.8 1136.8,388.0 C1140.3,392.2 1140.3,398.4 1141.0,400.5"/>
<path class="rc" d="M1103.3,379.6 L1099.2,433.0"/>
<path class="rc" d="M1103.3,392.2 C1107.8,392.6 1122.5,391.9 1130.5,394.3 C1138.5,396.7 1147.6,404.7 1151.0,406.8"/>
<path class="rc" d="M944.5,365.0 C944.5,366.7 943.5,370.9 944.5,375.4 C945.5,379.9 946.9,387.3 950.7,392.2 C954.5,397.1 959.0,398.2 967.4,404.7 C975.8,411.2 990.1,424.9 1000.9,431.4 C1011.7,437.9 1019.4,436.9 1032.3,443.9 C1045.2,450.9 1066.5,466.9 1078.3,473.2 C1090.1,479.5 1099.1,480.1 1103.3,481.5"/>
<path class="rc" d="M925.6,319.0 C924.9,327.0 921.1,357.7 921.5,367.1 C921.9,376.5 927.4,371.2 927.7,375.4 C928.0,379.6 925.2,388.0 923.5,392.2 C921.8,396.4 915.5,396.3 917.3,400.5 C919.0,404.7 931.2,414.5 934.0,417.3"/>
<path class="rc" d="M199.0,599.2 C217.1,594.3 283.3,581.9 307.7,570.0 C332.1,558.1 339.1,535.1 345.4,528.1"/>
<path class="rc" d="M420.6,612.8 L439.0,621.2"/>
<path class="rc" d="M414.3,553.2 C415.4,548.9 418.5,531.5 420.6,527.1 C422.7,522.8 425.5,525.7 426.9,527.1 C428.3,528.5 428.6,534.0 429.0,535.4"/>
<path class="rc" d="M439.0,512.5 L462.0,520.8"/>
<path class="rc" d="M439.0,531.3 L459.9,550.1"/>
<path class="rc" d="M585.4,495.7 C589.9,499.5 604.1,514.2 612.5,518.7 C620.9,523.2 628.5,519.4 635.5,522.9 C642.5,526.4 650.8,536.4 654.4,539.6 C658.0,542.8 656.6,541.6 657.0,542.0"/>
<path class="rc" d="M718.7,490.5 C716.3,492.1 706.7,497.6 704.1,499.9 C701.5,502.2 703.2,503.4 703.0,504.1"/>
<path class="rc" d="M764.7,538.6 C763.7,538.8 762.2,535.6 758.4,539.6 C754.6,543.6 743.1,556.7 741.7,562.6 C740.3,568.5 745.6,570.3 750.1,575.2 C754.6,580.1 764.7,589.8 768.9,591.9 C773.1,594.0 774.2,588.4 775.2,587.7"/>
<path class="rc" d="M276.4,802.1 C277.4,803.1 281.6,801.1 282.6,808.4 C283.6,815.7 282.6,839.7 282.6,846.0"/>
<path class="rc" d="M1151.0,609.0 C1148.6,612.8 1139.2,623.3 1136.8,632.0 C1134.4,640.7 1137.1,656.3 1136.8,661.3 C1136.5,666.3 1141.0,651.4 1134.7,662.0 C1128.4,672.6 1107.6,709.4 1099.2,724.7 C1090.8,740.0 1089.7,746.0 1084.5,754.0 C1079.3,762.0 1078.6,758.2 1067.8,772.8 C1057.0,787.4 1028.2,829.6 1019.7,841.8 C1011.2,854.0 1017.5,845.3 1017.0,846.0"/>
<path class="rc" d="M1124.3,540.0 L1151.0,554.6"/>
<path class="rc" d="M982.1,578.7 L1005.1,587.0"/>
<path class="rc" d="M1126.0,582.0 L1150.0,586.0"/>
<path class="rc" d="M449.5,846.0 C453.3,843.2 467.3,837.7 472.5,829.3 C477.7,820.9 479.1,802.4 480.8,795.8 C482.5,789.2 480.1,791.9 482.9,789.5 C485.7,787.1 489.8,783.1 497.5,781.2 C505.2,779.3 521.2,778.7 528.9,778.0 C536.6,777.3 537.6,774.0 543.5,777.0 C549.4,780.0 555.7,792.3 564.4,795.8 C573.1,799.3 589.5,796.8 595.8,797.9 C602.1,799.0 598.1,799.2 602.1,802.1 C606.1,805.0 613.7,815.4 620.0,815.0 C626.3,814.6 636.7,802.5 640.0,800.0"/>
<path class="rw" d="M199.0,115.1 C204.2,116.8 221.3,124.1 230.4,125.5 C239.5,126.9 248.5,124.5 253.4,123.5 C258.3,122.5 257.5,119.1 259.6,119.3 C261.7,119.5 259.3,123.1 265.9,124.5 C272.5,125.9 290.0,125.2 299.4,127.6 C308.8,130.0 318.2,135.4 322.4,139.1 C326.6,142.8 322.3,146.6 324.4,149.6 C326.5,152.6 331.1,153.6 334.9,156.9 C338.7,160.2 344.6,168.4 347.4,169.4 C350.2,170.4 346.7,164.1 351.6,163.2 C356.5,162.3 369.7,165.4 376.7,164.2 C383.7,163.0 389.2,156.1 393.4,155.9 C397.6,155.7 398.3,162.8 401.8,163.2 C405.3,163.5 410.5,158.0 414.3,158.0 C418.1,158.0 420.7,160.2 424.8,163.2 C428.9,166.1 433.1,170.1 439.0,175.7 C444.9,181.3 451.5,192.8 459.9,196.6 C468.3,200.4 483.6,196.2 489.2,198.7 C494.8,201.1 490.6,208.2 493.4,211.3 C496.2,214.4 500.3,219.6 505.9,217.5 C511.5,215.4 523.0,200.8 526.8,198.7 C530.6,196.6 529.9,199.4 528.9,205.0 C527.9,210.6 523.6,223.8 520.5,232.2 C517.4,240.6 511.5,250.3 510.1,255.2 C508.7,260.1 508.4,259.1 512.2,261.5 C516.0,263.9 528.6,269.5 533.1,269.8 C537.6,270.1 538.4,264.6 539.4,263.5"/>
<path class="rw" d="M378.8,196.6 C382.6,196.9 396.4,197.5 401.8,198.7 C407.2,199.9 409.4,200.8 411.2,203.9 C412.9,207.0 410.7,213.8 412.3,217.5 C413.9,221.2 418.7,221.0 420.6,225.9 C422.5,230.8 423.8,239.1 423.8,246.8 C423.8,254.5 420.1,263.7 420.6,271.9 C421.1,280.1 423.8,288.1 426.9,296.0 C430.0,303.9 432.4,309.6 439.0,319.0 C445.6,328.4 457.8,345.8 466.2,352.4 C474.6,359.0 477.0,348.6 489.2,358.7 C501.4,368.8 528.2,400.9 539.4,413.1 C550.5,425.3 551.0,426.4 556.1,431.9 C561.2,437.4 567.7,443.6 570.0,446.0"/>
<path class="rw" d="M501.7,167.8 C504.5,169.1 512.5,173.7 518.4,175.7 C524.3,177.7 531.7,177.4 537.3,179.9 C542.9,182.4 549.1,186.6 551.9,190.4 C554.7,194.2 554.7,199.8 554.0,202.9 C553.3,206.0 549.5,205.4 547.7,209.2 C546.0,213.0 544.2,221.0 543.5,225.9 C542.8,230.8 544.2,232.1 543.5,238.4 C542.8,244.7 541.8,256.9 539.4,263.5 C537.0,270.1 531.3,272.8 528.9,278.2 C526.5,283.6 525.4,289.6 524.7,296.0 C524.0,302.4 525.1,308.5 524.7,316.9 C524.4,325.3 523.0,341.3 522.6,346.2"/>
<path class="rw" d="M597.9,114.0 C596.5,115.6 591.6,119.8 589.5,123.5 C587.4,127.2 588.2,133.2 585.4,136.0 C582.6,138.8 576.3,137.6 572.8,140.2 C569.3,142.8 567.2,148.4 564.4,151.7 C561.6,155.0 561.3,157.9 556.1,160.0 C550.9,162.1 541.1,163.1 533.1,164.2 C525.1,165.2 513.2,165.7 508.0,166.3 C502.8,166.9 502.8,167.6 501.7,167.8"/>
<path class="rw" d="M564.4,151.7 C570.3,152.2 592.3,153.9 600.0,154.8 C607.7,155.7 605.2,155.7 610.4,156.9 C615.6,158.1 625.0,161.4 631.3,162.1 C637.6,162.8 640.0,160.6 648.0,161.1 C656.0,161.6 673.1,165.0 679.0,165.3 C684.9,165.7 680.4,159.7 683.2,163.2 C686.0,166.7 693.3,179.6 695.7,186.2 C698.1,192.8 696.0,198.4 697.8,202.9 C699.5,207.4 701.7,207.8 706.2,213.4 C710.7,219.0 722.2,230.5 725.0,236.4 C727.8,242.3 723.8,245.3 722.9,248.9 C722.0,252.5 729.6,255.4 719.8,257.9 C710.0,260.4 673.2,262.9 663.9,263.9"/>
<path class="rw" d="M600.0,155.9 C599.0,156.8 595.1,159.2 593.7,161.1 C592.3,163.0 593.3,165.7 591.6,167.4 C589.9,169.1 582.9,169.8 583.3,171.5 C583.6,173.2 592.0,175.4 593.7,177.8 C595.4,180.2 592.0,182.0 593.7,186.2 C595.5,190.4 602.1,199.1 604.2,202.9 C606.3,206.7 609.4,206.4 606.3,209.2 C603.2,212.0 590.3,216.5 585.4,219.6 C580.5,222.7 577.7,225.9 577.0,228.0 C576.3,230.1 573.5,230.8 581.2,232.2 C588.9,233.6 612.5,236.2 623.0,236.4 C633.5,236.6 640.4,233.7 643.9,233.2"/>
<path class="rw" d="M547.7,225.9 C550.5,223.8 558.1,214.8 564.4,213.4 C570.7,212.0 581.9,216.8 585.4,217.5"/>
<path class="rw" d="M564.4,213.4 C564.4,216.2 566.5,226.6 564.4,230.1 C562.3,233.6 554.0,233.6 551.9,234.3"/>
<path class="rw" d="M551.9,234.3 C555.4,234.3 566.5,233.6 572.8,234.3 C579.1,235.0 584.3,235.6 589.5,238.4 C594.7,241.2 601.4,247.5 604.2,251.0 C607.0,254.5 607.0,255.6 606.3,259.4 C605.6,263.2 598.6,270.2 600.0,274.0 C601.4,277.8 611.1,281.6 614.6,282.3 C618.1,283.0 619.1,282.7 620.9,278.2 C622.6,273.7 622.0,260.4 625.1,255.2 C628.2,250.0 635.9,249.2 639.7,246.8 C643.5,244.4 647.1,242.9 648.1,240.5 C649.1,238.1 646.4,233.6 646.0,232.2"/>
<path class="rw" d="M620.9,205.0 C625.4,208.5 642.2,221.4 648.1,225.9 C654.0,230.4 653.6,226.6 656.4,232.2 C659.2,237.8 664.4,248.8 664.8,259.4 C665.1,270.0 658.5,287.6 658.5,296.0 C658.5,304.4 663.9,307.7 665.0,310.0"/>
<path class="rw" d="M673.2,184.1 C671.1,186.2 663.4,190.3 660.6,196.6 C657.8,202.9 658.1,215.8 656.4,221.7 C654.7,227.6 651.2,230.4 650.2,232.2"/>
<path class="rw" d="M679.0,221.7 C677.3,222.8 672.8,226.2 669.0,228.0 C665.2,229.8 658.5,231.5 656.4,232.2"/>
<path class="rw" d="M706.2,174.7 C712.1,174.9 731.2,176.2 741.7,175.7 C752.2,175.2 758.5,171.8 768.9,171.5 C779.3,171.2 795.0,172.2 804.4,173.6 C813.8,175.0 819.1,177.3 825.4,179.9 C831.7,182.5 833.0,187.9 842.1,189.3 C851.2,190.7 870.3,186.0 879.7,188.3 C889.1,190.6 893.3,199.8 898.5,202.9 C903.7,206.0 907.2,204.3 911.0,207.1 C914.8,209.9 917.0,218.2 921.5,219.6 C926.0,221.0 929.5,218.2 938.2,215.4 C946.9,212.6 959.8,205.3 973.7,202.9 C987.6,200.5 1011.3,202.6 1021.8,200.8 C1032.2,199.1 1036.8,194.8 1036.4,192.4 C1036.1,190.0 1025.6,187.9 1019.7,186.2 C1013.8,184.5 1007.5,184.1 1000.9,182.0 C994.3,179.9 983.1,176.0 980.0,173.6 C976.9,171.2 979.0,168.8 982.1,167.4 C985.2,166.0 994.6,169.1 998.8,165.3 C1003.0,161.5 1006.2,150.3 1007.2,144.4 C1008.2,138.5 1008.2,132.5 1005.1,129.7 C1002.0,126.9 993.6,129.3 988.4,127.6 C983.2,125.9 977.5,121.4 973.7,119.3 C969.9,117.2 968.9,116.1 965.4,115.1 C961.9,114.0 954.9,113.3 952.8,113.0"/>
<path class="rw" d="M706.2,174.7 C708.6,173.5 715.2,170.2 720.8,167.4 C726.4,164.6 732.6,160.1 739.6,158.0 C746.6,155.9 758.4,157.8 762.6,154.8 C766.8,151.8 764.7,145.1 764.7,140.2 C764.7,135.3 764.0,128.6 762.6,125.5 C761.2,122.4 756.0,123.3 756.4,121.4 C756.8,119.5 763.3,115.2 764.7,114.0"/>
<path class="rw" d="M694.7,186.2 L706.2,174.7"/>
<path class="rw" d="M679.0,221.7 C683.5,220.6 695.8,214.7 706.2,215.4 C716.7,216.1 728.8,225.2 741.7,225.9 C754.6,226.6 771.6,218.9 783.5,219.6 C795.4,220.3 803.4,229.4 812.8,230.1 C822.2,230.8 834.8,228.0 840.0,223.8 C845.2,219.6 841.4,207.1 844.2,205.0 C847.0,202.9 844.2,208.9 856.7,211.3 C869.2,213.7 908.6,218.2 919.0,219.6"/>
<path class="rw" d="M737.5,232.2 C737.9,233.9 741.3,239.5 739.6,242.6 C737.9,245.7 729.2,249.6 727.1,251.0"/>
<path class="rw" d="M667.9,281.8 C670.9,280.8 677.1,279.5 685.8,275.8 C694.4,272.1 714.1,262.5 719.8,259.9"/>
<path class="rw" d="M669.9,281.8 C672.2,283.1 682.1,287.5 683.8,289.8 C685.4,292.1 680.5,294.8 679.8,295.8"/>
<path class="rw" d="M199.0,338.9 C212.9,343.1 260.7,356.2 282.6,364.0 C304.6,371.8 318.1,378.2 330.7,385.9 C343.2,393.6 349.5,403.7 357.9,410.0 C366.3,416.3 376.2,418.8 380.9,423.5 C385.6,428.2 385.8,432.3 386.1,438.2 C386.5,444.1 382.8,452.3 383.0,459.1 C383.2,465.9 382.3,471.9 387.2,479.0 C392.1,486.1 407.2,498.8 412.3,502.0 C417.4,505.2 417.1,498.7 418.0,498.0"/>
<path class="rw" d="M380.9,423.5 C388.4,423.0 416.1,421.3 425.8,420.4 C435.5,419.5 433.3,419.4 439.0,418.3 C444.7,417.2 456.5,414.7 460.0,414.0"/>
<path class="rw" d="M396.6,422.5 C398.5,412.6 406.4,373.5 408.1,362.9 C409.8,352.3 404.9,363.6 407.0,358.7 C409.1,353.8 415.3,339.9 420.6,333.6 C425.9,327.3 435.9,323.2 439.0,321.1"/>
<path class="rw" d="M389.3,355.6 L407.0,358.7"/>
<path class="rw" d="M408.1,362.9 C411.1,372.3 420.7,412.4 425.8,419.4 C430.9,426.4 436.8,407.1 439.0,404.7"/>
<path class="rw" d="M388.2,373.4 L403.9,377.5"/>
<path class="rw" d="M426.9,419.7 C429.9,421.8 439.1,427.8 445.0,432.0 C450.9,436.2 457.5,441.3 462.0,445.0 C466.5,448.7 470.3,452.5 472.0,454.0"/>
<path class="rw" d="M570.6,442.7 C576.5,440.2 588.2,433.3 606.3,427.7 C624.4,422.1 659.9,412.2 679.0,408.9 C698.1,405.6 709.6,407.5 720.8,407.9 C731.9,408.2 732.0,408.1 745.9,411.0 C759.8,413.9 781.4,419.0 804.4,425.6 C827.4,432.2 864.8,445.1 883.9,450.7 C903.0,456.3 900.5,453.6 919.0,459.1 C937.5,464.6 967.0,474.6 994.6,483.6 C1022.2,492.6 1058.4,508.4 1084.5,512.9 C1110.6,517.4 1139.9,511.1 1151.0,510.8"/>
<path class="rw" d="M639.3,415.1 C627.8,419.7 587.1,436.0 570.6,442.7 C554.1,449.4 548.0,449.0 540.5,455.3 C533.0,461.6 532.9,469.5 525.4,480.3 C517.9,491.1 505.8,505.2 495.4,520.4 C485.0,535.6 469.9,558.2 462.8,571.5 C455.7,584.8 456.8,593.1 452.8,600.3 C448.8,607.5 447.9,604.6 439.0,614.9 C430.1,625.2 420.9,639.2 399.7,662.0 C378.5,684.8 332.4,728.9 311.9,751.9 C291.3,774.9 288.9,784.3 276.4,800.0 C263.8,815.7 243.2,838.3 236.6,846.0"/>
<path class="rw" d="M495.5,479.0 C490.3,485.3 473.5,503.4 464.1,516.6 C454.7,529.8 445.2,547.6 439.0,558.4 C432.8,569.2 429.3,575.1 426.9,581.4 C424.5,587.7 426.6,590.2 424.8,596.1 C423.1,602.0 422.7,607.8 416.4,617.0 C410.1,626.2 392.1,645.8 387.2,651.5"/>
<path class="rw" d="M345.4,528.1 C353.7,527.7 383.8,528.9 395.0,525.9 C406.2,522.9 401.4,521.7 412.7,510.4 C424.0,499.1 442.4,476.4 463.0,458.0 C483.6,439.6 513.2,417.2 536.0,400.0 C558.8,382.8 578.5,368.7 600.0,355.0 C621.5,341.3 650.0,327.2 665.0,318.0 C680.0,308.8 685.8,303.0 690.0,300.0"/>
<path class="rw" d="M540.0,470.0 C544.2,465.0 555.8,450.8 565.0,440.0 C574.2,429.2 585.0,415.8 595.0,405.0 C605.0,394.2 614.2,385.8 625.0,375.0 C635.8,364.2 649.2,350.0 660.0,340.0 C670.8,330.0 685.0,319.2 690.0,315.0"/>
<path class="rw" d="M618.8,369.2 C624.0,371.3 640.0,377.8 650.0,382.0 C660.0,386.2 671.0,391.9 679.0,394.3 C687.0,396.7 691.9,394.0 697.8,396.4 C703.7,398.8 711.7,406.8 714.5,408.9"/>
<path class="rw" d="M478.7,348.3 C480.4,346.2 481.9,340.9 489.2,335.7 C496.5,330.5 510.8,321.9 522.6,316.9 C534.5,311.8 551.6,306.1 560.3,305.4 C569.0,304.7 570.7,309.7 574.9,312.7 C579.1,315.7 581.9,320.1 585.4,323.2 C588.9,326.3 594.1,330.1 595.8,331.5"/>
<path class="rw" d="M604.2,299.1 C605.6,303.5 610.5,318.5 612.5,325.3 C614.5,332.1 615.4,337.6 616.0,340.0"/>
<path class="rw" d="M663.9,299.8 C677.9,297.8 730.2,287.9 747.7,287.8 C765.2,287.7 761.2,291.5 768.9,299.1 C776.6,306.7 789.8,321.9 794.0,333.6 C798.2,345.3 796.8,355.6 794.0,369.2 C791.2,382.8 781.3,407.6 777.3,415.2 C773.3,422.8 771.2,415.0 770.0,415.0"/>
<path class="rw" d="M796.1,365.0 C798.5,361.0 804.4,344.3 810.7,341.0 C817.0,337.7 827.1,342.5 833.7,345.1 C840.3,347.7 848.3,351.2 850.4,356.6 C852.5,362.0 843.8,370.5 846.3,377.5 C848.8,384.5 864.4,387.9 865.1,398.4 C865.8,408.9 852.9,433.3 850.4,440.3"/>
<path class="rw" d="M817.0,339.9 C817.4,337.8 814.6,328.6 819.1,327.4 C823.6,326.2 840.0,331.7 844.2,332.6"/>
<path class="rw" d="M714.5,408.9 C711.0,412.7 696.0,423.4 693.6,431.9 C691.2,440.4 696.9,452.1 700.0,460.0 C703.1,467.9 709.4,474.1 712.5,479.0 C715.6,483.9 710.0,479.6 718.7,489.5 C727.4,499.4 756.5,530.0 764.7,538.6 C772.9,547.2 767.5,540.6 768.0,541.0"/>
<path class="rw" d="M890.2,448.6 C891.6,444.1 893.7,427.3 898.5,421.4 C903.3,415.5 915.6,414.5 919.0,413.1"/>
<path class="rw" d="M881.8,452.8 C882.1,454.6 880.8,458.9 883.9,463.3 C887.0,467.7 896.4,474.6 900.6,479.0 C904.8,483.4 905.9,487.1 909.0,489.5 C912.1,491.9 917.3,492.9 919.0,493.6"/>
<path class="rw" d="M679.0,314.8 C682.5,317.6 697.1,324.2 699.9,331.5 C702.7,338.8 699.2,353.5 695.7,358.7 C692.2,363.9 681.8,362.2 679.0,362.9"/>
<path class="rw" d="M703.8,275.8 C706.5,278.5 717.8,286.5 719.8,291.8 C721.8,297.1 715.8,303.8 715.8,307.8 C715.8,311.8 719.1,314.5 719.8,315.8"/>
<path class="rw" d="M1101.3,400.0 C1100.2,411.5 1094.7,451.6 1095.0,469.0 C1095.3,486.4 1101.9,498.6 1103.3,504.5"/>
<path class="rw" d="M1141.0,400.0 C1137.5,407.0 1126.4,431.7 1120.1,441.8 C1113.8,451.9 1102.6,455.4 1103.3,460.6 C1104.0,465.8 1116.3,475.6 1124.3,473.2 C1132.2,470.8 1146.5,450.5 1151.0,446.0"/>
<path class="rw" d="M1124.3,473.2 L1138.9,510.8"/>
<path class="rw" d="M1084.5,512.9 L1151.0,554.7"/>
<path class="rw" d="M1099.2,525.4 C1095.0,529.6 1086.3,540.9 1074.1,550.5 C1061.9,560.1 1037.5,576.9 1026.0,583.0 C1014.5,589.1 1012.4,587.7 1005.1,587.0 C997.8,586.3 985.9,580.1 982.1,578.7"/>
<path class="rw" d="M911.0,487.8 C916.6,488.3 937.2,489.4 944.5,491.0 C951.8,492.6 953.2,496.2 954.9,497.2"/>
<path class="rw" d="M911.0,410.5 L934.0,418.8"/>
<path class="rw" d="M996.7,328.4 C996.0,326.1 991.5,318.1 992.5,314.8 C993.5,311.5 998.8,310.4 1003.0,308.5 C1007.2,306.6 1014.8,305.7 1017.6,303.3 C1020.4,300.9 1016.6,294.2 1019.7,293.9 C1022.8,293.5 1027.3,300.5 1036.4,301.2 C1045.5,301.9 1062.2,296.2 1074.1,298.1 C1085.9,300.0 1097.8,308.5 1107.5,312.7 C1117.2,316.9 1125.3,321.1 1132.6,323.2 C1139.8,325.3 1147.9,324.9 1151.0,325.3"/>
<path class="rw" d="M1074.1,279.3 C1074.8,280.7 1077.9,284.8 1078.3,287.6 C1078.7,290.4 1076.5,294.6 1076.2,296.0"/>
<path class="rw" d="M1130.5,298.1 L1151.0,293.9"/>
<path class="rw" d="M1105.4,325.3 C1109.2,326.7 1123.9,333.2 1128.4,333.6 C1132.9,334.0 1131.9,328.4 1132.6,327.4"/>
<path class="rw" d="M1103.3,337.8 C1105.4,341.6 1113.1,354.5 1115.9,360.8 C1118.7,367.1 1116.6,370.9 1120.1,375.4 C1123.6,379.9 1133.3,383.8 1136.8,388.0 C1140.3,392.2 1140.3,398.4 1141.0,400.5"/>
<path class="rw" d="M1103.3,379.6 L1099.2,433.0"/>
<path class="rw" d="M1103.3,392.2 C1107.8,392.6 1122.5,391.9 1130.5,394.3 C1138.5,396.7 1147.6,404.7 1151.0,406.8"/>
<path class="rw" d="M944.5,365.0 C944.5,366.7 943.5,370.9 944.5,375.4 C945.5,379.9 946.9,387.3 950.7,392.2 C954.5,397.1 959.0,398.2 967.4,404.7 C975.8,411.2 990.1,424.9 1000.9,431.4 C1011.7,437.9 1019.4,436.9 1032.3,443.9 C1045.2,450.9 1066.5,466.9 1078.3,473.2 C1090.1,479.5 1099.1,480.1 1103.3,481.5"/>
<path class="rw" d="M925.6,319.0 C924.9,327.0 921.1,357.7 921.5,367.1 C921.9,376.5 927.4,371.2 927.7,375.4 C928.0,379.6 925.2,388.0 923.5,392.2 C921.8,396.4 915.5,396.3 917.3,400.5 C919.0,404.7 931.2,414.5 934.0,417.3"/>
<path class="rw" d="M199.0,599.2 C217.1,594.3 283.3,581.9 307.7,570.0 C332.1,558.1 339.1,535.1 345.4,528.1"/>
<path class="rw" d="M420.6,612.8 L439.0,621.2"/>
<path class="rw" d="M414.3,553.2 C415.4,548.9 418.5,531.5 420.6,527.1 C422.7,522.8 425.5,525.7 426.9,527.1 C428.3,528.5 428.6,534.0 429.0,535.4"/>
<path class="rw" d="M439.0,512.5 L462.0,520.8"/>
<path class="rw" d="M439.0,531.3 L459.9,550.1"/>
<path class="rw" d="M585.4,495.7 C589.9,499.5 604.1,514.2 612.5,518.7 C620.9,523.2 628.5,519.4 635.5,522.9 C642.5,526.4 650.8,536.4 654.4,539.6 C658.0,542.8 656.6,541.6 657.0,542.0"/>
<path class="rw" d="M718.7,490.5 C716.3,492.1 706.7,497.6 704.1,499.9 C701.5,502.2 703.2,503.4 703.0,504.1"/>
<path class="rw" d="M764.7,538.6 C763.7,538.8 762.2,535.6 758.4,539.6 C754.6,543.6 743.1,556.7 741.7,562.6 C740.3,568.5 745.6,570.3 750.1,575.2 C754.6,580.1 764.7,589.8 768.9,591.9 C773.1,594.0 774.2,588.4 775.2,587.7"/>
<path class="rw" d="M276.4,802.1 C277.4,803.1 281.6,801.1 282.6,808.4 C283.6,815.7 282.6,839.7 282.6,846.0"/>
<path class="rw" d="M1151.0,609.0 C1148.6,612.8 1139.2,623.3 1136.8,632.0 C1134.4,640.7 1137.1,656.3 1136.8,661.3 C1136.5,666.3 1141.0,651.4 1134.7,662.0 C1128.4,672.6 1107.6,709.4 1099.2,724.7 C1090.8,740.0 1089.7,746.0 1084.5,754.0 C1079.3,762.0 1078.6,758.2 1067.8,772.8 C1057.0,787.4 1028.2,829.6 1019.7,841.8 C1011.2,854.0 1017.5,845.3 1017.0,846.0"/>
<path class="rw" d="M1124.3,540.0 L1151.0,554.6"/>
<path class="rw" d="M982.1,578.7 L1005.1,587.0"/>
<path class="rw" d="M1126.0,582.0 L1150.0,586.0"/>
<path class="rw" d="M449.5,846.0 C453.3,843.2 467.3,837.7 472.5,829.3 C477.7,820.9 479.1,802.4 480.8,795.8 C482.5,789.2 480.1,791.9 482.9,789.5 C485.7,787.1 489.8,783.1 497.5,781.2 C505.2,779.3 521.2,778.7 528.9,778.0 C536.6,777.3 537.6,774.0 543.5,777.0 C549.4,780.0 555.7,792.3 564.4,795.8 C573.1,799.3 589.5,796.8 595.8,797.9 C602.1,799.0 598.1,799.2 602.1,802.1 C606.1,805.0 613.7,815.4 620.0,815.0 C626.3,814.6 636.7,802.5 640.0,800.0"/>
<path class="gc" d="M766.0,540.0 C780.1,549.2 829.7,581.5 850.4,595.0 C871.1,608.5 878.8,614.1 890.2,621.2 C901.6,628.4 907.9,631.1 919.0,637.9 C930.1,644.7 938.8,650.8 957.0,662.0 C975.2,673.2 1014.9,696.9 1028.1,704.9 C1041.3,712.9 1031.2,696.7 1036.4,710.1 C1041.6,723.5 1055.6,772.9 1059.4,785.4"/>
<path class="gc" d="M455.7,602.4 C454.3,606.2 446.7,618.7 447.4,625.3 C448.1,631.9 457.5,636.0 459.9,642.1 C462.3,648.2 462.0,650.0 462.0,662.0 C462.0,674.0 461.6,700.4 459.9,714.3 C458.1,728.2 455.0,736.2 451.5,745.6 C448.0,755.0 441.1,766.5 439.0,770.7"/>
<path class="gc" d="M768.9,629.5 C773.4,627.1 782.5,620.5 796.1,614.9 C809.7,609.3 841.4,599.2 850.4,596.1"/>
<path class="gc" d="M768.9,633.7 C789.1,631.6 865.2,624.3 890.2,621.2 C915.2,618.1 910.7,616.6 919.0,614.9 C927.3,613.2 936.5,611.6 940.0,611.0"/>
<path class="gc" d="M890.2,621.2 L911.1,590.9"/>
<path class="gc" d="M890.2,621.2 C885.3,628.0 866.1,655.2 860.9,662.0 C855.7,668.8 861.9,658.2 858.8,662.0 C855.7,665.8 848.4,676.6 842.1,685.0 C835.8,693.4 837.9,689.2 821.2,712.2 C804.5,735.2 755.0,804.5 741.7,823.0"/>
<path class="gc" d="M890.2,621.2 C888.1,628.0 880.1,653.8 877.6,662.0 C875.1,670.2 877.2,668.3 875.5,670.4 C873.8,672.5 872.8,672.1 867.2,674.5 C861.6,676.9 846.3,683.2 842.1,685.0"/>
<path class="gc" d="M768.9,633.7 C769.2,635.8 771.4,643.5 771.0,646.3 C770.6,649.1 767.5,649.7 766.8,650.4"/>
<path class="gc" d="M685.0,664.0 C689.6,662.4 701.6,659.3 712.5,654.6 C723.4,649.9 740.7,638.2 750.1,635.8 C759.5,633.4 765.8,639.3 768.9,640.0"/>
<path class="gc" d="M812.8,631.6 C811.4,635.1 809.3,647.4 804.4,652.5 C799.5,657.6 789.1,659.7 783.5,662.0 C777.9,664.3 776.9,663.6 771.0,666.2 C765.1,668.8 755.0,669.3 748.0,677.7 C741.0,686.1 730.6,703.0 729.2,716.4 C727.8,729.8 735.4,749.2 739.6,758.2 C743.8,767.2 754.3,766.5 754.3,770.7 C754.3,774.9 742.7,778.1 739.6,783.3 C736.5,788.5 737.2,796.9 735.5,802.1 C733.8,807.3 730.2,812.5 729.2,814.6"/>
<path class="gc" d="M911.0,618.4 C914.5,617.4 923.9,613.1 931.9,612.1 C939.9,611.1 952.1,610.5 959.1,612.1 C966.1,613.7 969.2,618.9 973.7,621.5 C978.2,624.1 982.5,623.6 986.3,627.8 C990.1,632.0 992.9,642.1 996.7,646.6 C1000.5,651.1 1003.7,651.2 1009.3,655.0 C1014.9,658.8 1025.3,664.7 1030.2,669.6 C1035.1,674.5 1037.5,680.0 1038.5,684.3 C1039.5,688.6 1038.5,691.9 1036.4,695.5 C1034.3,699.1 1030.2,703.1 1026.0,705.9 C1021.8,708.7 1015.9,709.4 1011.4,712.2 C1006.9,715.0 1000.5,718.4 998.8,722.6 C997.0,726.8 1001.6,733.8 1000.9,737.3 C1000.2,740.8 997.0,741.4 994.6,743.5 C992.2,745.6 991.9,746.0 986.3,749.8 C980.7,753.6 966.4,764.4 961.2,766.5 C956.0,768.6 959.1,762.8 954.9,762.4 C950.7,762.0 940.3,764.9 936.1,764.4 C931.9,763.9 932.6,760.6 929.8,759.2 C926.9,757.8 924.6,757.3 919.0,756.1 C913.4,754.9 902.9,752.6 896.4,751.9 C889.9,751.2 884.9,753.5 879.7,751.9 C874.5,750.3 870.7,743.9 865.1,742.5 C859.5,741.1 849.4,743.3 846.3,743.5"/>
<path class="gc" d="M911.0,591.2 C919.0,591.4 950.4,591.6 959.1,592.3 C967.8,593.0 962.6,594.9 963.3,595.4"/>
<path class="gc" d="M457.8,671.4 C460.6,671.6 471.0,669.5 474.5,672.5 C478.0,675.5 473.1,685.7 478.7,689.2 C484.3,692.7 501.4,691.3 508.0,693.4 C514.6,695.5 517.0,697.9 518.4,701.7 C519.8,705.5 519.5,711.9 516.4,716.4 C513.3,720.9 501.7,725.4 499.6,728.9 C497.5,732.4 502.1,732.4 503.8,737.3 C505.6,742.2 507.0,753.7 510.1,758.2 C513.2,762.7 514.9,763.5 522.6,764.4 C530.3,765.3 543.2,762.7 556.1,763.4 C569.0,764.1 589.9,766.7 600.0,768.6 C610.1,770.5 611.5,773.2 616.7,774.9 C621.9,776.6 628.6,778.3 631.0,779.0"/>
<path class="gc" d="M501.7,731.0 C497.5,732.4 482.5,735.9 476.6,739.4 C470.7,742.9 469.0,743.9 466.2,751.9 C463.4,759.9 462.3,779.4 459.9,787.4 C457.4,795.4 455.0,800.0 451.5,800.0 C448.0,800.0 441.1,789.5 439.0,787.4"/>
<path class="gc" d="M637.6,770.7 C644.5,762.7 668.6,734.4 679.0,722.6 C689.4,710.8 696.5,703.8 700.0,700.0"/>
<path class="gc" d="M664.8,662.0 L679.0,682.9"/>
<path class="gc" d="M593.7,837.6 C607.9,836.9 659.2,835.1 679.0,833.4 C698.8,831.7 704.8,830.3 712.5,827.2 C720.2,824.1 722.9,816.7 725.0,814.6"/>
<path class="gc" d="M616.7,754.0 C619.5,754.7 629.9,755.1 633.4,758.2 C636.9,761.3 635.1,767.2 637.6,772.8 C640.1,778.4 646.7,785.7 648.1,791.6 C649.5,797.5 648.1,804.9 646.0,808.4 C643.9,811.9 635.5,809.7 635.5,812.5 C635.5,815.3 645.2,819.5 646.0,825.1 C646.8,830.7 641.0,842.5 640.0,846.0"/>
<path class="gc" d="M710.4,662.0 C710.6,664.1 713.0,669.6 711.4,674.5 C709.8,679.4 706.4,690.2 701.0,691.3 C695.6,692.3 682.7,682.5 679.0,680.8"/>
<path class="gc" d="M701.0,691.3 L679.0,722.6"/>
<path class="gc" d="M701.0,691.3 C702.6,700.3 706.0,725.4 710.4,745.6 C714.8,765.8 724.0,801.0 727.1,812.5 C730.2,824.0 723.3,809.0 729.2,814.6 C735.1,820.2 757.0,840.8 762.6,846.0"/>
<path class="gc" d="M787.7,664.1 C790.5,667.6 801.6,680.1 804.4,685.0 C807.2,689.9 802.3,690.6 804.4,693.4 C806.5,696.2 814.2,698.6 817.0,701.7 C819.8,704.8 819.1,707.7 821.2,712.2 C823.3,716.7 825.3,723.7 829.5,728.9 C833.7,734.1 844.2,738.6 846.3,743.5 C848.4,748.4 842.5,751.6 842.1,758.2 C841.8,764.8 847.7,775.3 844.2,783.3 C840.7,791.3 824.7,799.0 821.2,806.3 C817.7,813.6 821.9,822.0 823.3,827.2 C824.7,832.4 829.2,834.5 829.5,837.6 C829.8,840.7 825.8,844.6 825.0,846.0"/>
<path class="gc" d="M823.3,810.4 C824.7,810.6 826.0,805.6 831.6,811.5 C837.2,817.4 852.5,840.2 856.7,846.0"/>
<path class="gc" d="M957.0,662.0 L1028.1,704.9"/>
<path class="gw" d="M766.0,540.0 C780.1,549.2 829.7,581.5 850.4,595.0 C871.1,608.5 878.8,614.1 890.2,621.2 C901.6,628.4 907.9,631.1 919.0,637.9 C930.1,644.7 938.8,650.8 957.0,662.0 C975.2,673.2 1014.9,696.9 1028.1,704.9 C1041.3,712.9 1031.2,696.7 1036.4,710.1 C1041.6,723.5 1055.6,772.9 1059.4,785.4"/>
<path class="gw" d="M455.7,602.4 C454.3,606.2 446.7,618.7 447.4,625.3 C448.1,631.9 457.5,636.0 459.9,642.1 C462.3,648.2 462.0,650.0 462.0,662.0 C462.0,674.0 461.6,700.4 459.9,714.3 C458.1,728.2 455.0,736.2 451.5,745.6 C448.0,755.0 441.1,766.5 439.0,770.7"/>
<path class="gw" d="M768.9,629.5 C773.4,627.1 782.5,620.5 796.1,614.9 C809.7,609.3 841.4,599.2 850.4,596.1"/>
<path class="gw" d="M768.9,633.7 C789.1,631.6 865.2,624.3 890.2,621.2 C915.2,618.1 910.7,616.6 919.0,614.9 C927.3,613.2 936.5,611.6 940.0,611.0"/>
<path class="gw" d="M890.2,621.2 L911.1,590.9"/>
<path class="gw" d="M890.2,621.2 C885.3,628.0 866.1,655.2 860.9,662.0 C855.7,668.8 861.9,658.2 858.8,662.0 C855.7,665.8 848.4,676.6 842.1,685.0 C835.8,693.4 837.9,689.2 821.2,712.2 C804.5,735.2 755.0,804.5 741.7,823.0"/>
<path class="gw" d="M890.2,621.2 C888.1,628.0 880.1,653.8 877.6,662.0 C875.1,670.2 877.2,668.3 875.5,670.4 C873.8,672.5 872.8,672.1 867.2,674.5 C861.6,676.9 846.3,683.2 842.1,685.0"/>
<path class="gw" d="M768.9,633.7 C769.2,635.8 771.4,643.5 771.0,646.3 C770.6,649.1 767.5,649.7 766.8,650.4"/>
<path class="gw" d="M685.0,664.0 C689.6,662.4 701.6,659.3 712.5,654.6 C723.4,649.9 740.7,638.2 750.1,635.8 C759.5,633.4 765.8,639.3 768.9,640.0"/>
<path class="gw" d="M812.8,631.6 C811.4,635.1 809.3,647.4 804.4,652.5 C799.5,657.6 789.1,659.7 783.5,662.0 C777.9,664.3 776.9,663.6 771.0,666.2 C765.1,668.8 755.0,669.3 748.0,677.7 C741.0,686.1 730.6,703.0 729.2,716.4 C727.8,729.8 735.4,749.2 739.6,758.2 C743.8,767.2 754.3,766.5 754.3,770.7 C754.3,774.9 742.7,778.1 739.6,783.3 C736.5,788.5 737.2,796.9 735.5,802.1 C733.8,807.3 730.2,812.5 729.2,814.6"/>
<path class="gw" d="M911.0,618.4 C914.5,617.4 923.9,613.1 931.9,612.1 C939.9,611.1 952.1,610.5 959.1,612.1 C966.1,613.7 969.2,618.9 973.7,621.5 C978.2,624.1 982.5,623.6 986.3,627.8 C990.1,632.0 992.9,642.1 996.7,646.6 C1000.5,651.1 1003.7,651.2 1009.3,655.0 C1014.9,658.8 1025.3,664.7 1030.2,669.6 C1035.1,674.5 1037.5,680.0 1038.5,684.3 C1039.5,688.6 1038.5,691.9 1036.4,695.5 C1034.3,699.1 1030.2,703.1 1026.0,705.9 C1021.8,708.7 1015.9,709.4 1011.4,712.2 C1006.9,715.0 1000.5,718.4 998.8,722.6 C997.0,726.8 1001.6,733.8 1000.9,737.3 C1000.2,740.8 997.0,741.4 994.6,743.5 C992.2,745.6 991.9,746.0 986.3,749.8 C980.7,753.6 966.4,764.4 961.2,766.5 C956.0,768.6 959.1,762.8 954.9,762.4 C950.7,762.0 940.3,764.9 936.1,764.4 C931.9,763.9 932.6,760.6 929.8,759.2 C926.9,757.8 924.6,757.3 919.0,756.1 C913.4,754.9 902.9,752.6 896.4,751.9 C889.9,751.2 884.9,753.5 879.7,751.9 C874.5,750.3 870.7,743.9 865.1,742.5 C859.5,741.1 849.4,743.3 846.3,743.5"/>
<path class="gw" d="M911.0,591.2 C919.0,591.4 950.4,591.6 959.1,592.3 C967.8,593.0 962.6,594.9 963.3,595.4"/>
<path class="gw" d="M457.8,671.4 C460.6,671.6 471.0,669.5 474.5,672.5 C478.0,675.5 473.1,685.7 478.7,689.2 C484.3,692.7 501.4,691.3 508.0,693.4 C514.6,695.5 517.0,697.9 518.4,701.7 C519.8,705.5 519.5,711.9 516.4,716.4 C513.3,720.9 501.7,725.4 499.6,728.9 C497.5,732.4 502.1,732.4 503.8,737.3 C505.6,742.2 507.0,753.7 510.1,758.2 C513.2,762.7 514.9,763.5 522.6,764.4 C530.3,765.3 543.2,762.7 556.1,763.4 C569.0,764.1 589.9,766.7 600.0,768.6 C610.1,770.5 611.5,773.2 616.7,774.9 C621.9,776.6 628.6,778.3 631.0,779.0"/>
<path class="gw" d="M501.7,731.0 C497.5,732.4 482.5,735.9 476.6,739.4 C470.7,742.9 469.0,743.9 466.2,751.9 C463.4,759.9 462.3,779.4 459.9,787.4 C457.4,795.4 455.0,800.0 451.5,800.0 C448.0,800.0 441.1,789.5 439.0,787.4"/>
<path class="gw" d="M637.6,770.7 C644.5,762.7 668.6,734.4 679.0,722.6 C689.4,710.8 696.5,703.8 700.0,700.0"/>
<path class="gw" d="M664.8,662.0 L679.0,682.9"/>
<path class="gw" d="M593.7,837.6 C607.9,836.9 659.2,835.1 679.0,833.4 C698.8,831.7 704.8,830.3 712.5,827.2 C720.2,824.1 722.9,816.7 725.0,814.6"/>
<path class="gw" d="M616.7,754.0 C619.5,754.7 629.9,755.1 633.4,758.2 C636.9,761.3 635.1,767.2 637.6,772.8 C640.1,778.4 646.7,785.7 648.1,791.6 C649.5,797.5 648.1,804.9 646.0,808.4 C643.9,811.9 635.5,809.7 635.5,812.5 C635.5,815.3 645.2,819.5 646.0,825.1 C646.8,830.7 641.0,842.5 640.0,846.0"/>
<path class="gw" d="M710.4,662.0 C710.6,664.1 713.0,669.6 711.4,674.5 C709.8,679.4 706.4,690.2 701.0,691.3 C695.6,692.3 682.7,682.5 679.0,680.8"/>
<path class="gw" d="M701.0,691.3 L679.0,722.6"/>
<path class="gw" d="M701.0,691.3 C702.6,700.3 706.0,725.4 710.4,745.6 C714.8,765.8 724.0,801.0 727.1,812.5 C730.2,824.0 723.3,809.0 729.2,814.6 C735.1,820.2 757.0,840.8 762.6,846.0"/>
<path class="gw" d="M787.7,664.1 C790.5,667.6 801.6,680.1 804.4,685.0 C807.2,689.9 802.3,690.6 804.4,693.4 C806.5,696.2 814.2,698.6 817.0,701.7 C819.8,704.8 819.1,707.7 821.2,712.2 C823.3,716.7 825.3,723.7 829.5,728.9 C833.7,734.1 844.2,738.6 846.3,743.5 C848.4,748.4 842.5,751.6 842.1,758.2 C841.8,764.8 847.7,775.3 844.2,783.3 C840.7,791.3 824.7,799.0 821.2,806.3 C817.7,813.6 821.9,822.0 823.3,827.2 C824.7,832.4 829.2,834.5 829.5,837.6 C829.8,840.7 825.8,844.6 825.0,846.0"/>
<path class="gw" d="M823.3,810.4 C824.7,810.6 826.0,805.6 831.6,811.5 C837.2,817.4 852.5,840.2 856.7,846.0"/>
<path class="gw" d="M957.0,662.0 L1028.1,704.9"/>
<g font-family="Liberation Sans" fill="#111" stroke="#111" stroke-width="0.25"><text x="322" y="144" transform="rotate(19.6 322 144)" font-size="13" textLength="184" lengthAdjust="spacingAndGlyphs">Wolfkloof Hut to Glenstroom Hut</text>
<text x="763" y="166" transform="rotate(11 763 166)" font-size="13" textLength="131" lengthAdjust="spacingAndGlyphs">Glenstroom to Boskloof</text>
<text x="713" y="229" transform="rotate(-8 713 229)" font-size="13" textLength="126" lengthAdjust="spacingAndGlyphs">Appelsblos Circle Trail</text>
<text x="970" y="121" transform="rotate(58 970 121)" font-size="13" textLength="131" lengthAdjust="spacingAndGlyphs">Glenstroom to Boskloof</text>
<text x="411" y="373" transform="rotate(52 411 373)" font-size="13" textLength="78" lengthAdjust="spacingAndGlyphs">Bethel Street</text>
<text x="393" y="520" transform="rotate(-44 393 520)" font-size="13" textLength="92" lengthAdjust="spacingAndGlyphs">Voortrek Street</text>
<text x="464" y="451" transform="rotate(-39 464 451)" font-size="13" textLength="91" lengthAdjust="spacingAndGlyphs">Voortrek Street</text>
<text x="467" y="511" transform="rotate(-40 467 511)" font-size="13" textLength="80" lengthAdjust="spacingAndGlyphs">Cooper Street</text>
<text x="563" y="437" transform="rotate(-46.5 563 437)" font-size="13" textLength="85" lengthAdjust="spacingAndGlyphs">Drostdy Street</text>
<text x="613" y="368" transform="rotate(-45 613 368)" font-size="13" textLength="70" lengthAdjust="spacingAndGlyphs">Berg Street</text>
<text x="624" y="369" transform="rotate(26 624 369)" font-size="13" textLength="85" lengthAdjust="spacingAndGlyphs">Swellengrebel</text>
<text x="513" y="499" transform="rotate(-55 513 499)" font-size="13" textLength="25" lengthAdjust="spacingAndGlyphs">Ring</text>
<text x="537" y="498" transform="rotate(24 537 498)" font-size="13" textLength="36" lengthAdjust="spacingAndGlyphs">Protea</text>
<text x="585" y="476" transform="rotate(62 585 476)" font-size="13" textLength="22" lengthAdjust="spacingAndGlyphs">May</text>
<text x="504" y="585" transform="rotate(-68 504 585)" font-size="13" textLength="62" lengthAdjust="spacingAndGlyphs">Delphinium</text>
<text x="556" y="530" transform="rotate(74 556 530)" font-size="13" textLength="52" lengthAdjust="spacingAndGlyphs">Ranonkel</text>
<text x="406" y="623" transform="rotate(-63 406 623)" font-size="13" textLength="61" lengthAdjust="spacingAndGlyphs">Koringland</text>
<text x="766" y="633" transform="rotate(-28 766 633)" font-size="13" textLength="62" lengthAdjust="spacingAndGlyphs">Main Road</text>
<text x="854" y="667" transform="rotate(12.5 854 667)" font-size="13" textLength="123" lengthAdjust="spacingAndGlyphs">The Blue Crane Train</text>
<text x="847" y="737" transform="rotate(-0.6 847 737)" font-size="13" textLength="173" lengthAdjust="spacingAndGlyphs">The Cobra Mountain Bike Trail</text>
<text x="451" y="743" transform="rotate(-79 451 743)" font-size="13" textLength="43" lengthAdjust="spacingAndGlyphs">Ou Tuin</text>
<text x="469" y="729" transform="rotate(24 469 729)" font-size="13" textLength="82" lengthAdjust="spacingAndGlyphs">Bushbuck Trail</text>
<text x="615" y="776" transform="rotate(-77 615 776)" font-size="13" textLength="66" lengthAdjust="spacingAndGlyphs">Acacia Trail</text>
<text x="576" y="841" transform="rotate(-40 576 841)" font-size="13" textLength="79" lengthAdjust="spacingAndGlyphs">Aloe Hill Trail</text></g>
</svg></div>
<div class="a" style="left:0;top:846px;width:1151px;height:28px;background:#f0f0f0"></div>
<div class="a" style="left:5px;top:849px;width:199px;height:22px;background:#fff;border:1px solid #a0a0a0;border-radius:4px"></div><svg class="ic" style="left:11px;top:853px" width="14" height="14"><circle cx="6" cy="6" r="4.2" fill="none" stroke="#666" stroke-width="1.3"/><path d="M9 9 L12.5 12.5" stroke="#666" stroke-width="1.6"/></svg><div class="t" style="left:32px;top:854px;font-size:11.3px;color:#6d6d6d">Type to locate (Ctrl+K)</div><div class="t" style="left:323px;top:854px;font-size:10.7px">Coordinate</div><div class="a" style="left:380px;top:850px;width:103px;height:21px;background:#fff;border:1px solid #b8b8b8;border-radius:2px"></div><div class="t" style="left:386px;top:854px;font-size:11.1px">20.5190,-33.9846</div><svg class="ic" style="left:486px;top:851px" width="18" height="18"><ellipse cx="8" cy="9" rx="5" ry="6.5" fill="#fff" stroke="#333" stroke-width="1.2"/><path d="M4 5 Q8 8 12 5 M8 3 V8" stroke="#333" fill="none"/><path d="M12 2 L16 5 M13 14 L16 11" stroke="#555"/></svg><div class="t" style="left:515px;top:854px;font-size:11.3px">Scale</div><div class="a" style="left:544px;top:850px;width:80px;height:21px;background:#fff;border:1px solid #b8b8b8;border-radius:2px"></div><div class="a" style="left:604px;top:851px;width:1px;height:19px;background:#d0d0d0"></div><div class="dd" style="left:609px;top:858px"></div><div class="t" style="left:548px;top:854px;font-size:11.3px">1:35434</div><svg class="ic" style="left:636px;top:851px" width="14" height="18"><path d="M3.5 8 V5.5 Q3.5 2 7 2 Q10.5 2 10.5 5.5 V8" fill="none" stroke="#555" stroke-width="1.6"/><rect x="2" y="8" width="10" height="8" rx="1" fill="#555"/></svg><div class="t" style="left:657px;top:854px;font-size:11.3px">Magnifier</div><div class="a" style="left:705px;top:850px;width:87px;height:21px;background:#fff;border:1px solid #b8b8b8;border-radius:2px"></div><div class="a" style="left:779px;top:851px;width:1px;height:19px;background:#d0d0d0"></div><div class="arr" style="left:781px;top:854px;border-left:4px solid transparent;border-right:4px solid transparent;border-bottom:4px solid #555"></div><div class="arr" style="left:781px;top:862px;border-left:4px solid transparent;border-right:4px solid transparent;border-top:4px solid #555"></div><div class="t" style="left:711px;top:854px;font-size:11.3px">100%</div><div class="t" style="left:801px;top:854px;font-size:11.3px">Rotation</div><div class="a" style="left:852px;top:850px;width:84px;height:21px;background:#fff;border:1px solid #b8b8b8;border-radius:2px"></div><div class="a" style="left:921px;top:851px;width:1px;height:19px;background:#d0d0d0"></div><div class="arr" style="left:923px;top:854px;border-left:4px solid transparent;border-right:4px solid transparent;border-bottom:4px solid #555"></div><div class="arr" style="left:923px;top:862px;border-left:4px solid transparent;border-right:4px solid transparent;border-top:4px solid #555"></div><div class="t" style="left:856px;top:854px;font-size:11.3px">0.0 &#176;</div><div class="cb" style="left:942px;top:854px;width:13px;height:14px"></div><svg class="ic" style="left:943px;top:854px" width="12" height="12"><path d="M2.5 6 L5 9.5 L10 1.5" stroke="#111" stroke-width="1.6" fill="none"/></svg><div class="t" style="left:960px;top:854px;font-size:11.3px">Render</div><svg class="ic" style="left:1014px;top:853px" width="15" height="15"><path d="M7.5 1 L13 5 V11 L7.5 14 L2 11 V5 Z" fill="none" stroke="#777" stroke-width="1"/><path d="M2 7.5 H13 M7.5 1 V14 M4 4 Q7.5 7.5 4 11 M11 4 Q7.5 7.5 11 11" stroke="#777" fill="none" stroke-width="0.8"/></svg><div class="t" style="left:1032px;top:854px;font-size:10.6px">EPSG:4326</div><svg class="ic" style="left:1104px;top:852px" width="18" height="16"><ellipse cx="9" cy="7" rx="8" ry="6.3" fill="#666"/><path d="M10 12 L14 15.5 L13 11" fill="#666"/><circle cx="5.5" cy="7" r="1.2" fill="#fff"/><circle cx="9" cy="7" r="1.2" fill="#fff"/><circle cx="12.5" cy="7" r="1.2" fill="#fff"/></svg>
<div class="a" style="left:1150px;top:113px;width:1px;height:733px;background:#dcdcdc"></div>
<div class="a" style="left:0;top:0;width:1152px;height:1px;background:#1a1a1a"></div>
<div class="a" style="left:0;top:874px;width:1152px;height:1px;background:#1a1a1a"></div>
<div class="a" style="left:1151px;top:0;width:1px;height:875px;background:#1a1a1a"></div>
</body></html>
